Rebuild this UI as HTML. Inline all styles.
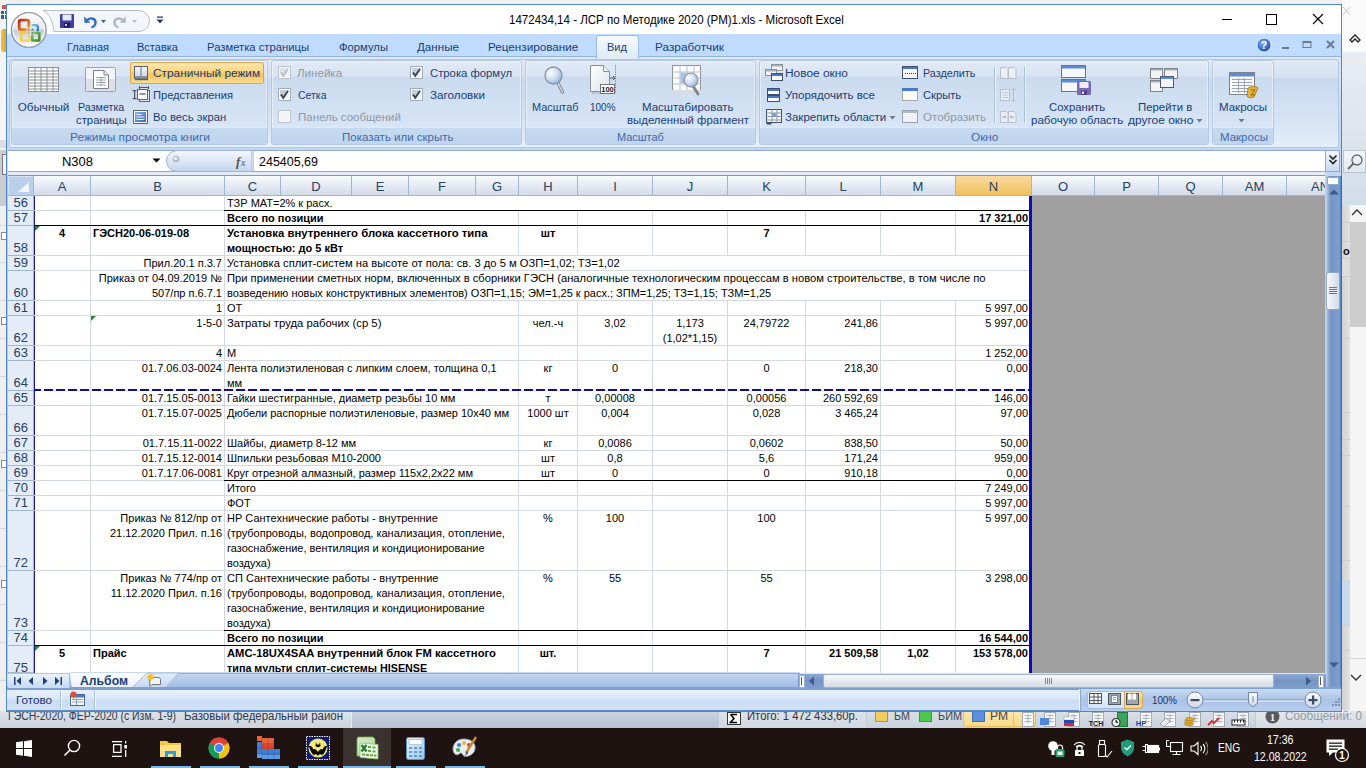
<!DOCTYPE html><html><head><meta charset="utf-8"><style>
*{margin:0;padding:0;box-sizing:border-box}
html,body{width:1366px;height:768px;overflow:hidden;background:#EEEEEE;font-family:"Liberation Sans", sans-serif;position:relative}
.a{position:absolute}
.tx{position:absolute;line-height:1;white-space:nowrap}
.ct{position:absolute;font-size:11px;line-height:15px;color:#000;white-space:nowrap;padding:0 2px}
.ch{position:absolute;top:176px;height:20px;background:linear-gradient(#F9FCFD,#E4EAF3 50%,#D3DBE9);font-size:13px;line-height:21px;text-align:center;color:#27415F;border-right:1px solid #9EB6CE;border-bottom:1px solid #9EB6CE}
.ch.sel{background:linear-gradient(#F9D99F,#F1C15F);color:#27415F}
.rh{position:absolute;left:8px;width:26px;background:#E4ECF7;border-bottom:1px solid #9EB6CE;border-right:1px solid #9EB6CE;font-size:13px;color:#27415F;overflow:hidden}
.rh span{position:absolute;right:5px;line-height:16px}
.grp{position:absolute;top:60px;height:85px;border:1px solid #B3C9E4;border-radius:3px;background:linear-gradient(#E1EAF6,#D7E3F3 15px,#CBDBEE 16px,#D6E4F5 64px,#DFEBFA 68px);box-shadow:inset 0 0 0 1px rgba(255,255,255,0.45)}
.gl{position:absolute;left:0;right:0;bottom:0;height:16px;background:linear-gradient(#C5D9F0,#C0D5EE);border-radius:0 0 2px 2px}
</style></head><body>
<div class="a" style="left:0;top:0;width:1366px;height:728px;background:#EEEEEE"></div><div class="a" style="left:0;top:0;width:7px;height:150px;background:#F4F4F4"></div><svg class="a" style="left:0;top:4px" width="7" height="16"><rect x="2" y="1" width="5" height="4" fill="#D9534F"/><rect x="1" y="7" width="6" height="8" fill="#2F5FA8"/><rect x="1" y="10" width="6" height="1" fill="#fff"/><rect x="4" y="7" width="1" height="8" fill="#fff"/></svg><div class="a" style="left:1px;top:29px;width:6px;height:23px;background:linear-gradient(90deg,#F2C14E,#E0A21C);border-radius:3px 0 0 3px"></div><div class="a" style="left:0;top:140px;width:7px;height:8px;background:#DADDE2"></div><div class="a" style="left:0;top:150px;width:7px;height:56px;background:#C9CDD3"></div><div class="a" style="left:2px;top:154px;width:5px;height:21px;background:#F2F2F2;border:1px solid #7A7A7A;border-right:none"></div><div class="a" style="left:0;top:206px;width:7px;height:504px;background:#EFEFEF"></div><div class="a" style="left:0;top:225px;width:7px;height:1px;background:#D6D6D6"></div><div class="a" style="left:0;top:262px;width:7px;height:1px;background:#D6D6D6"></div><div class="a" style="left:0;top:300px;width:7px;height:1px;background:#D6D6D6"></div><div class="a" style="left:0;top:338px;width:7px;height:1px;background:#D6D6D6"></div><div class="a" style="left:0;top:376px;width:7px;height:1px;background:#D6D6D6"></div><div class="a" style="left:0;top:414px;width:7px;height:1px;background:#D6D6D6"></div><div class="a" style="left:0;top:452px;width:7px;height:1px;background:#D6D6D6"></div><div class="a" style="left:0;top:490px;width:7px;height:1px;background:#D6D6D6"></div><div class="a" style="left:0;top:528px;width:7px;height:1px;background:#D6D6D6"></div><div class="a" style="left:0;top:566px;width:7px;height:1px;background:#D6D6D6"></div><div class="a" style="left:0;top:604px;width:7px;height:1px;background:#D6D6D6"></div><div class="a" style="left:0;top:642px;width:7px;height:1px;background:#D6D6D6"></div><div class="a" style="left:0;top:680px;width:7px;height:1px;background:#D6D6D6"></div><div class="a" style="left:1px;top:232px;width:6px;height:8px;border:1px solid #8A8A8A;border-right:none;background:#fff"></div><div class="a" style="left:1px;top:317px;width:6px;height:8px;border:1px solid #8A8A8A;border-right:none;background:#fff"></div><div class="a" style="left:1px;top:460px;width:6px;height:8px;border:1px solid #8A8A8A;border-right:none;background:#fff"></div><div class="a" style="left:1px;top:580px;width:6px;height:8px;border:1px solid #8A8A8A;border-right:none;background:#fff"></div><div class="a" style="left:1342px;top:0;width:24px;height:52px;background:#FAFAFA"></div><svg class="a" style="left:1342px;top:6px" width="10" height="12"><path d="M1 1 L8 9 M8 1 L1 9" stroke="#C8C8C8" stroke-width="1"/></svg><div class="a" style="left:1342px;top:52px;width:24px;height:153px;background:linear-gradient(#E8EDF3,#D3DDE9)"></div><svg class="a" style="left:1348px;top:31px" width="16" height="14"><path d="M2 9 L7 4 L12 9 L10 11 L7 8 L4 11 Z" fill="none" stroke="#222" stroke-width="1.3"/></svg><div class="a" style="left:1343px;top:150px;width:23px;height:23px;background:linear-gradient(#F4F6F9,#E0E6EE);border:1px solid #BCC6D3"></div><svg class="a" style="left:1345px;top:153px" width="20" height="18"><circle cx="12" cy="7" r="5" fill="none" stroke="#666" stroke-width="1.3"/><path d="M8.5 10.5 L3 16" stroke="#666" stroke-width="1.8"/></svg><div class="a" style="left:1342px;top:205px;width:24px;height:523px;background:#F5F5F5"></div><div class="a" style="left:1342px;top:205px;width:8px;height:505px;background:linear-gradient(90deg,#D2D2D2,#E2E2E2)"></div><div class="a" style="left:1342px;top:259px;width:8px;height:17px;background:#DCDCDC"></div><div class="a" style="left:1343px;top:245px;font:bold 11px Liberation Sans;color:#111">o</div><div class="a" style="left:1342px;top:222px;width:8px;height:1px;background:#C9CFD6"></div><div class="a" style="left:1342px;top:241px;width:8px;height:1px;background:#C9CFD6"></div><div class="a" style="left:1342px;top:258px;width:8px;height:1px;background:#C9CFD6"></div><div class="a" style="left:1342px;top:276px;width:8px;height:1px;background:#C9CFD6"></div><div class="a" style="left:1342px;top:338px;width:8px;height:1px;background:#C9CFD6"></div><div class="a" style="left:1342px;top:412px;width:8px;height:1px;background:#C9CFD6"></div><div class="a" style="left:1342px;top:439px;width:8px;height:1px;background:#C9CFD6"></div><div class="a" style="left:1342px;top:455px;width:8px;height:1px;background:#C9CFD6"></div><div class="a" style="left:1342px;top:506px;width:8px;height:1px;background:#C9CFD6"></div><div class="a" style="left:1342px;top:560px;width:8px;height:1px;background:#C9CFD6"></div><div class="a" style="left:1342px;top:625px;width:8px;height:1px;background:#C9CFD6"></div><div class="a" style="left:1342px;top:650px;width:8px;height:1px;background:#C9CFD6"></div><div class="a" style="left:1342px;top:580px;width:8px;height:45px;background:#C9D9EC"></div><svg class="a" style="left:1350px;top:207px" width="14" height="10"><path d="M2 8 L7 3 L12 8" fill="none" stroke="#333" stroke-width="1.4"/></svg><div class="a" style="left:1350px;top:222px;width:16px;height:105px;background:#CDCDCD"></div><div class="a" style="left:1342px;top:658px;width:24px;height:1px;background:#D9D9D9"></div><svg class="a" style="left:1349px;top:673px" width="14" height="10"><path d="M2 2 L7 7 L12 2" fill="none" stroke="#333" stroke-width="1.4"/></svg>
<div class="a" style="left:0;top:711px;width:1366px;height:17px;background:linear-gradient(#CBD3DE,#B6C1CF)"></div><div class="a" style="left:0;top:711px;width:351px;height:17px;background:linear-gradient(#DDE3EA,#CBD3DD)"></div><div class="a" style="left:351px;top:711px;width:1px;height:17px;background:#E6EBF1"></div><div class="a" style="left:719px;top:711px;width:147px;height:17px;background:linear-gradient(#DDE3EA,#CFD7E1)"></div><div class="a" style="left:866px;top:711px;width:390px;height:17px;background:linear-gradient(#D8DFE7,#C8D1DC)"></div><div class="a" style="left:1256px;top:711px;width:110px;height:17px;background:linear-gradient(#E4E8ED,#D5DBE3)"></div><div class="tx" style="left:8.00px;top:709.54px;font-size:12.300px;color:#2B3A4E;transform:scaleX(0.8508);transform-origin:0 0">ГЭСН-2020, ФЕР-2020 (с Изм. 1-9)</div><div class="tx" style="left:184.00px;top:709.54px;font-size:12.300px;color:#2B3A4E;transform:scaleX(0.9308);transform-origin:0 0">Базовый федеральный район</div><div class="a" style="left:718px;top:711px;width:1px;height:17px;background:#C3CAD4"></div><svg class="a" style="left:727px;top:712px" width="14" height="13"><rect x="0.5" y="0.5" width="13" height="12" fill="#fff" stroke="#333"/><path d="M3.5 2.5 H10 M3.5 2.5 L7 6.5 L3.5 10.5 H10" fill="none" stroke="#000" stroke-width="1.6"/></svg><div class="tx" style="left:747.00px;top:710.04px;font-size:12.300px;color:#333;transform:scaleX(0.9164);transform-origin:0 0">Итого: 1 472 433,60р.</div><div class="a" style="left:866px;top:711px;width:1px;height:17px;background:#C3CAD4"></div><div class="a" style="left:875px;top:710px;width:13px;height:12px;background:#F1CC5E;border:1px solid #B89531"></div><div class="tx" style="left:894.00px;top:709.80px;font-size:12.000px;color:#444;transform:scaleX(0.8951);transform-origin:0 0">БМ</div><div class="a" style="left:919px;top:710px;width:13px;height:12px;background:#4FC74A;border:1px solid #3A9A36"></div><div class="tx" style="left:938.00px;top:709.80px;font-size:12.000px;color:#444;transform:scaleX(0.9057);transform-origin:0 0">БИМ</div><div class="a" style="left:963px;top:706px;width:53px;height:21px;background:linear-gradient(#FCEBB8,#F8D987);border:1px solid #E3BE62;border-radius:3px"></div><div class="a" style="left:972px;top:710px;width:13px;height:12px;background:#5B8FE0;border:1px solid #3D6CB8"></div><div class="tx" style="left:990.00px;top:709.80px;font-size:12.000px;color:#444;transform:scaleX(1.0070);transform-origin:0 0">РМ</div><div class="a" style="left:1013px;top:706px;width:23px;height:21px;background:linear-gradient(#FCEBB8,#F8D987);border:1px solid #E3BE62;border-radius:3px"></div><svg class="a" style="left:0;top:712px" width="1260" height="16"><rect x="1022.5" y="0.5" width="11" height="14" fill="#F7F8FA" stroke="#A3AAB3"/><g fill="#AEB5BE"><rect x="1024.5" y="3" width="7" height="1"/><rect x="1024.5" y="6" width="7" height="1"/><rect x="1024.5" y="9" width="7" height="1"/><rect x="1027.5" y="2" width="1" height="9"/></g><rect x="1044.5" y="0.5" width="11" height="14" fill="#F7F8FA" stroke="#A3AAB3"/><g fill="#AEB5BE"><rect x="1046.5" y="3" width="7" height="1"/><rect x="1046.5" y="6" width="7" height="1"/><rect x="1046.5" y="9" width="7" height="1"/><rect x="1049.5" y="2" width="1" height="9"/></g><rect x="1040" y="6" width="9" height="7" fill="#4F86D9"/><rect x="1068.5" y="0.5" width="11" height="14" fill="#F7F8FA" stroke="#A3AAB3"/><g fill="#AEB5BE"><rect x="1070.5" y="3" width="7" height="1"/><rect x="1070.5" y="6" width="7" height="1"/><rect x="1070.5" y="9" width="7" height="1"/><rect x="1073.5" y="2" width="1" height="9"/></g><rect x="1064" y="5" width="10" height="3" fill="#FFFFFF" stroke="#999" stroke-width="0.5"/><rect x="1064" y="8" width="10" height="3" fill="#2446B8"/><rect x="1064" y="11" width="10" height="3" fill="#D42A2A"/><rect x="1092.5" y="0.5" width="11" height="14" fill="#F7F8FA" stroke="#A3AAB3"/><g fill="#AEB5BE"><rect x="1094.5" y="3" width="7" height="1"/><rect x="1094.5" y="6" width="7" height="1"/><rect x="1094.5" y="9" width="7" height="1"/><rect x="1097.5" y="2" width="1" height="9"/></g><text x="1096" y="13.5" font-family="Liberation Sans" font-size="7" font-weight="bold" fill="#111" text-anchor="middle">TCH</text><rect x="1117.5" y="0.5" width="10" height="14" fill="#3DA35A" stroke="#1F7A3A"/><circle cx="1116" cy="10.5" r="4" fill="#F4F4F4" stroke="#333" stroke-width="1.2"/><path d="M1116 8 V10.5 H1118" stroke="#333" stroke-width="1"/><rect x="1140.5" y="0.5" width="11" height="14" fill="#F7F8FA" stroke="#A3AAB3"/><g fill="#AEB5BE"><rect x="1142.5" y="3" width="7" height="1"/><rect x="1142.5" y="6" width="7" height="1"/><rect x="1142.5" y="9" width="7" height="1"/><rect x="1145.5" y="2" width="1" height="9"/></g><text x="1141" y="13.5" font-family="Liberation Sans" font-size="7.5" font-weight="bold" fill="#1E3FA8" text-anchor="middle">HP</text><rect x="1164.5" y="0.5" width="11" height="14" fill="#F7F8FA" stroke="#A3AAB3"/><g fill="#AEB5BE"><rect x="1166.5" y="3" width="7" height="1"/><rect x="1166.5" y="6" width="7" height="1"/><rect x="1166.5" y="9" width="7" height="1"/><rect x="1169.5" y="2" width="1" height="9"/></g><path d="M1160 12 L1166 6 L1170 9 L1164 15 Z" fill="#E9EBEE" stroke="#8C9298" stroke-width="0.8"/><rect x="1189.5" y="0.5" width="11" height="14" fill="#F7F8FA" stroke="#A3AAB3"/><g fill="#AEB5BE"><rect x="1191.5" y="3" width="7" height="1"/><rect x="1191.5" y="6" width="7" height="1"/><rect x="1191.5" y="9" width="7" height="1"/><rect x="1194.5" y="2" width="1" height="9"/></g><g fill="#E0A92A" stroke="#8E6A12" stroke-width="0.5"><ellipse cx="1189" cy="12" rx="4.5" ry="1.8"/><ellipse cx="1189" cy="9.5" rx="4.5" ry="1.8"/><ellipse cx="1190" cy="7" rx="4.5" ry="1.8"/></g><rect x="1213.5" y="0.5" width="11" height="14" fill="#F7F8FA" stroke="#A3AAB3"/><g fill="#AEB5BE"><rect x="1215.5" y="3" width="7" height="1"/><rect x="1215.5" y="6" width="7" height="1"/><rect x="1215.5" y="9" width="7" height="1"/><rect x="1218.5" y="2" width="1" height="9"/></g><path d="M1208 13 L1212 9 L1214 11 L1219 6" fill="none" stroke="#D4302A" stroke-width="1.8"/><rect x="1237.5" y="0.5" width="11" height="14" fill="#F7F8FA" stroke="#A3AAB3"/><g fill="#AEB5BE"><rect x="1239.5" y="3" width="7" height="1"/><rect x="1239.5" y="6" width="7" height="1"/><rect x="1239.5" y="9" width="7" height="1"/><rect x="1242.5" y="2" width="1" height="9"/></g><rect x="1232" y="8" width="13" height="5" fill="#FFFFFF" stroke="#222" stroke-width="1"/><g fill="#222"><rect x="1234" y="8" width="1" height="2.5"/><rect x="1237" y="8" width="1" height="2.5"/><rect x="1240" y="8" width="1" height="2.5"/><rect x="1243" y="8" width="1" height="2.5"/></g></svg><div class="a" style="left:1255px;top:711px;width:1px;height:17px;background:#C3CAD4"></div><svg class="a" style="left:1265px;top:709px" width="16" height="16"><circle cx="7.5" cy="7.5" r="7" fill="#595959"/><text x="7.5" y="11.5" font-family="Liberation Serif" font-size="11" font-weight="bold" fill="#F0F0F0" text-anchor="middle">1</text></svg><div class="tx" style="left:1285.00px;top:709.54px;font-size:12.300px;color:#9099A5;transform:scaleX(0.9550);transform-origin:0 0">Сообщений: 0</div>
<div class="a" style="left:6px;top:4px;width:1336px;height:708px;background:#BFDBFF;border:1px solid #4F86C6;box-shadow:inset 1px 0 0 #A9C8EE, inset -1px 0 0 #A9C8EE"></div>
<div class="a" style="left:7px;top:5px;width:1334px;height:29px;background:#fff"></div>
<div class="a" style="left:7px;top:34px;width:1334px;height:23px;background:#BFDBFF"></div><div class="a" style="left:7px;top:56px;width:1334px;height:1px;background:#92B4E0"></div><div class="tx" style="left:67.00px;top:41.45px;font-size:11.700px;color:#183E74;transform:scaleX(0.9442);transform-origin:0 0">Главная</div><div class="tx" style="left:137.00px;top:41.45px;font-size:11.700px;color:#183E74;transform:scaleX(0.9435);transform-origin:0 0">Вставка</div><div class="tx" style="left:207.00px;top:41.45px;font-size:11.700px;color:#183E74;transform:scaleX(0.9620);transform-origin:0 0">Разметка страницы</div><div class="tx" style="left:339.00px;top:41.45px;font-size:11.700px;color:#183E74;transform:scaleX(0.9634);transform-origin:0 0">Формулы</div><div class="tx" style="left:417.00px;top:41.45px;font-size:11.700px;color:#183E74;transform:scaleX(0.9945);transform-origin:0 0">Данные</div><div class="tx" style="left:488.00px;top:41.45px;font-size:11.700px;color:#183E74">Рецензирование</div><div class="tx" style="left:655.00px;top:41.45px;font-size:11.700px;color:#183E74;transform:scaleX(1.0124);transform-origin:0 0">Разработчик</div><svg class="a" style="left:1250px;top:36px" width="90" height="20">
<defs><radialGradient id="hg" cx="40%" cy="35%" r="65%"><stop offset="0" stop-color="#7FB2F0"/><stop offset="1" stop-color="#1A4FB8"/></radialGradient></defs>
<circle cx="14" cy="9" r="7" fill="url(#hg)" stroke="#fff" stroke-width="0.8"/>
<text x="14" y="12.8" font-family="Liberation Sans" font-size="10.5" font-weight="bold" fill="#fff" text-anchor="middle">?</text>
<rect x="32" y="11" width="7" height="2" fill="#6C7A8D"/>
<rect x="53" y="5.5" width="8" height="6" fill="none" stroke="#6C7A8D" stroke-width="1"/><rect x="53" y="5" width="8" height="2" fill="#6C7A8D"/>
<path d="M77 5 L84 12 M84 5 L77 12" stroke="#6C7A8D" stroke-width="2"/>
</svg>
<div class="a" style="left:7px;top:57px;width:1334px;height:93px;background:linear-gradient(#E2EAF6 0px,#DAE6F4 3px,#C9DAEE 60%,#C3D6EE 100%)"></div><div class="a" style="left:596px;top:35px;width:43px;height:24px;border:1px solid #9EBBE2;border-bottom:none;border-radius:3px 3px 0 0;background:linear-gradient(#F7FAFE,#E6EEF8 70%,#E2EAF6)"></div><div class="tx" style="left:607.00px;top:41.62px;font-size:11.500px;color:#183E74;transform:scaleX(0.9610);transform-origin:0 0">Вид</div><div class="a" style="left:9px;top:59px;width:1330px;height:89px;border:1px solid #AFC8E6;border-radius:3px;background:linear-gradient(#E0E9F5,#D5E1F1 20%,#C8D9EE 22%,#DCE8F7 85%,#E6F0FC)"></div><div class="grp" style="left:11px;width:257px"><div class="gl"></div></div><div class="tx" style="left:69.70px;top:131.65px;font-size:11.000px;color:#3E6AAA;transform:scaleX(1.0808);transform-origin:0 0">Режимы просмотра книги</div><div class="grp" style="left:271px;width:251px"><div class="gl"></div></div><div class="tx" style="left:341.60px;top:131.65px;font-size:11.000px;color:#3E6AAA;transform:scaleX(1.0451);transform-origin:0 0">Показать или скрыть</div><div class="grp" style="left:525px;width:231px"><div class="gl"></div></div><div class="tx" style="left:617.40px;top:131.65px;font-size:11.000px;color:#3E6AAA;transform:scaleX(0.9965);transform-origin:0 0">Масштаб</div><div class="grp" style="left:759px;width:450px"><div class="gl"></div></div><div class="tx" style="left:970.80px;top:131.65px;font-size:11.000px;color:#3E6AAA;transform:scaleX(1.0719);transform-origin:0 0">Окно</div><div class="grp" style="left:1212px;width:62px"><div class="gl"></div></div><div class="tx" style="left:1219.60px;top:131.65px;font-size:11.000px;color:#3E6AAA;transform:scaleX(1.0445);transform-origin:0 0">Макросы</div><svg class="a" style="left:27px;top:66px" width="34" height="28"><rect x="1.5" y="1.5" width="30" height="24" fill="#fff" stroke="#8E9094" stroke-width="1"/><rect x="7.5" y="1.5" width="1" height="24" fill="#8E9094"/><rect x="13.5" y="1.5" width="1" height="24" fill="#8E9094"/><rect x="19.5" y="1.5" width="1" height="24" fill="#8E9094"/><rect x="25.5" y="1.5" width="1" height="24" fill="#8E9094"/><rect x="1.5" y="4.5" width="30" height="1" fill="#8E9094"/><rect x="1.5" y="7.5" width="30" height="1" fill="#8E9094"/><rect x="1.5" y="10.5" width="30" height="1" fill="#8E9094"/><rect x="1.5" y="13.5" width="30" height="1" fill="#8E9094"/><rect x="1.5" y="16.5" width="30" height="1" fill="#8E9094"/><rect x="1.5" y="19.5" width="30" height="1" fill="#8E9094"/><rect x="1.5" y="22.5" width="30" height="1" fill="#8E9094"/></svg><div class="tx" style="left:17.70px;top:100.86px;font-size:11.700px;color:#183E74">Обычный</div><svg class="a" style="left:84px;top:66px" width="34" height="28">
<rect x="1.5" y="1.5" width="30" height="24" rx="1" fill="#F2F4F7" stroke="#9EA3AA"/>
<rect x="2" y="13" width="29" height="12" fill="#DDE1E7"/>
<path d="M9.5 4.5 H20 L24.5 9 V22.5 H9.5 Z" fill="#fff" stroke="#7B818A"/>
<path d="M20 4.5 V9 H24.5" fill="#E6E9EE" stroke="#7B818A"/>
<g fill="#9AA2AD"><rect x="12" y="11" width="10" height="1"/><rect x="12" y="13.5" width="10" height="1"/><rect x="12" y="16" width="10" height="1"/><rect x="12" y="18.5" width="10" height="1"/><rect x="16.5" y="11" width="1" height="9"/></g>
</svg><div class="tx" style="left:77.70px;top:100.86px;font-size:11.700px;color:#183E74;transform:scaleX(0.9165);transform-origin:0 0">Разметка</div><div class="tx" style="left:76.00px;top:113.56px;font-size:11.700px;color:#183E74;transform:scaleX(0.9698);transform-origin:0 0">страницы</div><div class="a" style="left:130px;top:62px;width:134px;height:22px;border:1px solid #D9A84E;border-radius:2px;background:linear-gradient(#FDE7B0,#FBD583 45%,#F9C25C 55%,#FBDC8E)"></div><svg class="a" style="left:133px;top:65px" width="16" height="16">
<defs><linearGradient id="sr" x1="0" y1="0" x2="0" y2="1"><stop offset="0" stop-color="#F4F7FC"/><stop offset="1" stop-color="#C7D3E6"/></linearGradient></defs>
<rect x="1.5" y="1.5" width="13" height="12" fill="url(#sr)" stroke="#59606B"/>
<rect x="7.5" y="2" width="1" height="10" fill="#6B7380"/>
<rect x="2" y="11" width="12" height="2.5" fill="#8A929E"/>
<rect x="2" y="14" width="13" height="1.2" fill="#3E434B" opacity="0.8"/>
</svg><div class="tx" style="left:152.70px;top:66.56px;font-size:11.700px;color:#183E74;transform:scaleX(1.0128);transform-origin:0 0">Страничный режим</div><svg class="a" style="left:132px;top:86px" width="19" height="17">
<g fill="#4A5566"><rect x="2" y="4" width="1.2" height="9"/><rect x="0.5" y="4" width="4" height="1.2"/><rect x="0.5" y="12" width="4" height="1.2"/>
<rect x="7" y="1" width="10" height="1"/><rect x="7" y="0" width="1" height="3"/><rect x="16" y="0" width="1" height="3"/></g>
<rect x="7.5" y="4.5" width="10" height="11" fill="#E6EAF0" stroke="#5B6573"/>
<rect x="5.5" y="3.5" width="10" height="10" fill="#F7F9FC" stroke="#5B6573"/>
<rect x="7.5" y="7" width="6" height="2" fill="#8C96A6"/>
</svg><div class="tx" style="left:152.50px;top:88.96px;font-size:11.700px;color:#183E74;transform:scaleX(0.9500);transform-origin:0 0">Представления</div><svg class="a" style="left:132px;top:109px" width="17" height="16">
<defs><linearGradient id="fs" x1="0" y1="0" x2="1" y2="1"><stop offset="0" stop-color="#8FB3EC"/><stop offset="1" stop-color="#3C63B8"/></linearGradient></defs>
<rect x="1.5" y="1.5" width="14" height="13" fill="#FAFBFD" stroke="#5A6270"/>
<rect x="3" y="3" width="11" height="10" fill="url(#fs)"/>
<rect x="4.5" y="5" width="5" height="1" fill="#EAF1FC"/><rect x="4.5" y="7.5" width="8" height="1" fill="#EAF1FC"/><rect x="4.5" y="10" width="8" height="1" fill="#EAF1FC"/>
</svg><div class="tx" style="left:152.50px;top:110.66px;font-size:11.700px;color:#183E74;transform:scaleX(0.9651);transform-origin:0 0">Во весь экран</div><svg class="a" style="left:278px;top:66px" width="13" height="13"><rect x="0.5" y="0.5" width="12" height="12" fill="#FAFBFC" stroke="#B9C2CE"/><rect x="2" y="2" width="9" height="9" fill="#F1F3F6"/><rect x="2" y="2" width="6" height="6" fill="#DDE2E8"/><path d="M3 6.5 L5.3 9.8 L10 2.8" fill="none" stroke="#B9C1CC" stroke-width="1.9"/></svg><svg class="a" style="left:278px;top:88px" width="13" height="13"><rect x="0.5" y="0.5" width="12" height="12" fill="#FAFBFC" stroke="#A2ADBA"/><rect x="2" y="2" width="9" height="9" fill="#F1F3F6"/><rect x="2" y="2" width="6" height="6" fill="#C9CED6"/><path d="M3 6.5 L5.3 9.8 L10 2.8" fill="none" stroke="#34435E" stroke-width="1.9"/></svg><svg class="a" style="left:278px;top:110px" width="13" height="13"><rect x="0.5" y="0.5" width="12" height="12" fill="#FAFBFC" stroke="#B9C2CE"/><rect x="2" y="2" width="9" height="9" fill="#F1F3F6"/></svg><svg class="a" style="left:410px;top:66px" width="13" height="13"><rect x="0.5" y="0.5" width="12" height="12" fill="#FAFBFC" stroke="#A2ADBA"/><rect x="2" y="2" width="9" height="9" fill="#F1F3F6"/><rect x="2" y="2" width="6" height="6" fill="#C9CED6"/><path d="M3 6.5 L5.3 9.8 L10 2.8" fill="none" stroke="#34435E" stroke-width="1.9"/></svg><svg class="a" style="left:410px;top:88px" width="13" height="13"><rect x="0.5" y="0.5" width="12" height="12" fill="#FAFBFC" stroke="#A2ADBA"/><rect x="2" y="2" width="9" height="9" fill="#F1F3F6"/><rect x="2" y="2" width="6" height="6" fill="#C9CED6"/><path d="M3 6.5 L5.3 9.8 L10 2.8" fill="none" stroke="#34435E" stroke-width="1.9"/></svg><div class="tx" style="left:297.20px;top:66.76px;font-size:11.700px;color:#8D98A8;transform:scaleX(0.9898);transform-origin:0 0">Линейка</div><div class="tx" style="left:297.50px;top:88.66px;font-size:11.700px;color:#183E74;transform:scaleX(0.8968);transform-origin:0 0">Сетка</div><div class="tx" style="left:297.50px;top:110.56px;font-size:11.700px;color:#8D98A8;transform:scaleX(0.9819);transform-origin:0 0">Панель сообщений</div><div class="tx" style="left:429.50px;top:66.76px;font-size:11.700px;color:#183E74;transform:scaleX(0.9658);transform-origin:0 0">Строка формул</div><div class="tx" style="left:429.50px;top:88.66px;font-size:11.700px;color:#183E74;transform:scaleX(0.9959);transform-origin:0 0">Заголовки</div><svg class="a" style="left:540px;top:63px" width="30" height="32">
<defs><radialGradient id="lens" cx="35%" cy="35%" r="70%"><stop offset="0" stop-color="#FFFFFF"/><stop offset="0.6" stop-color="#C9DAF0"/><stop offset="1" stop-color="#8FB1E0"/></radialGradient></defs>
<path d="M17.5 19 L22.5 29" stroke="#7E8691" stroke-width="3.2" stroke-linecap="round"/>
<path d="M17.5 19 L22.5 29" stroke="#D9DDE3" stroke-width="1.4" stroke-linecap="round"/>
<circle cx="13.5" cy="12.5" r="8.5" fill="url(#lens)" stroke="#8A939E" stroke-width="1.3"/>
</svg><div class="tx" style="left:531.60px;top:100.66px;font-size:11.700px;color:#183E74;transform:scaleX(0.9297);transform-origin:0 0">Масштаб</div><svg class="a" style="left:588px;top:63px" width="30" height="33">
<path d="M27.5 2 V30 H3" fill="none" stroke="#6D737B" stroke-width="1" stroke-dasharray="1,1.2"/>
<path d="M2.5 2.5 H15.5 L21.5 8.5 V28.5 H2.5 Z" fill="url(#pg)" stroke="#8A9099"/>
<defs><linearGradient id="pg" x1="0" y1="0" x2="1" y2="1"><stop offset="0" stop-color="#FFFFFF"/><stop offset="1" stop-color="#DCE2EA"/></linearGradient></defs>
<path d="M15.5 2.5 V8.5 H21.5" fill="#EEF1F5" stroke="#8A9099"/>
<path d="M22 15 H27 M25 13 L27 15 L25 17" fill="none" stroke="#555" stroke-width="1"/>
<rect x="12.5" y="21.5" width="14" height="9" fill="#fff" stroke="#6D737B"/>
<text x="19.5" y="29" font-family="Liberation Sans" font-size="7.5" font-weight="bold" fill="#222" text-anchor="middle">100</text>
</svg><div class="tx" style="left:590.30px;top:100.66px;font-size:11.700px;color:#183E74;transform:scaleX(0.8527);transform-origin:0 0">100%</div><svg class="a" style="left:671px;top:64px" width="34" height="32">
<rect x="1.5" y="1.5" width="28" height="26" fill="#fff" stroke="#8D949C"/>
<g fill="#B8C1CC"><rect x="8.5" y="1.5" width="1" height="26"/><rect x="15.5" y="1.5" width="1" height="26"/><rect x="22.5" y="1.5" width="1" height="26"/>
<rect x="1.5" y="7.5" width="28" height="1"/><rect x="1.5" y="13.5" width="28" height="1"/><rect x="1.5" y="19.5" width="28" height="1"/></g>
<rect x="9.5" y="8.5" width="6" height="11" fill="#A8C2EC"/>
<rect x="1" y="26" width="29" height="4" fill="#D7DCE3"/>
<path d="M22 22 L27 30" stroke="#7E8691" stroke-width="3" stroke-linecap="round"/>
<circle cx="20" cy="16" r="7" fill="url(#lens)" stroke="#8A939E" stroke-width="1.2"/>
</svg><div class="tx" style="left:641.60px;top:100.66px;font-size:11.700px;color:#183E74;transform:scaleX(0.9807);transform-origin:0 0">Масштабировать</div><div class="tx" style="left:626.90px;top:113.56px;font-size:11.700px;color:#183E74;transform:scaleX(0.9747);transform-origin:0 0">выделенный фрагмент</div><svg class="a" style="left:765px;top:64px" width="20" height="18">
<rect x="6.5" y="0.5" width="11" height="6" fill="#F3F5F8" stroke="#8B929C"/><rect x="7" y="1" width="10" height="1.5" fill="#A9B1BC"/>
<rect x="0.5" y="5.5" width="11" height="6" fill="#F3F5F8" stroke="#8B929C"/><rect x="1" y="6" width="10" height="1.5" fill="#A9B1BC"/>
<rect x="6.5" y="9.5" width="11" height="7" fill="#FAFBFD" stroke="#3F4F6E"/><rect x="7" y="10" width="10" height="2" fill="#4C78C9"/>
</svg><div class="tx" style="left:785.40px;top:66.76px;font-size:11.700px;color:#183E74;transform:scaleX(1.0171);transform-origin:0 0">Новое окно</div><svg class="a" style="left:766px;top:87px" width="16" height="16">
<rect x="1.5" y="1.5" width="12" height="6" fill="#F8FAFD" stroke="#3E4D6B"/><rect x="2" y="2" width="11" height="2" fill="#4C78C9"/>
<rect x="1.5" y="8.5" width="12" height="6" fill="#F8FAFD" stroke="#3E4D6B"/><rect x="2" y="9" width="11" height="2" fill="#4C78C9"/>
</svg><div class="tx" style="left:785.40px;top:88.66px;font-size:11.700px;color:#183E74;transform:scaleX(0.9866);transform-origin:0 0">Упорядочить все</div><svg class="a" style="left:765px;top:108px" width="18" height="18">
<rect x="1.5" y="1.5" width="15" height="13" fill="#F8FAFD" stroke="#3E4D6B"/>
<g fill="#8D96A4"><rect x="1.5" y="4.5" width="15" height="1"/><rect x="1.5" y="8" width="15" height="1"/><rect x="1.5" y="11.5" width="15" height="1"/><rect x="6.5" y="1.5" width="1" height="13"/><rect x="11.5" y="1.5" width="1" height="13"/></g>
<rect x="7" y="5" width="4.5" height="3" fill="#7FA3DC"/>
<rect x="1.5" y="14.5" width="5" height="2" fill="#3E4D6B"/>
</svg><div class="tx" style="left:785.40px;top:110.56px;font-size:11.700px;color:#183E74;transform:scaleX(0.9841);transform-origin:0 0">Закрепить области</div><svg class="a" style="left:889px;top:115px" width="8" height="6"><path d="M0.5 1 H6.5 L3.5 4.5 Z" fill="#6B7A90"/></svg><svg class="a" style="left:902px;top:66px" width="18" height="15">
<rect x="0.5" y="0.5" width="15" height="12" fill="#F6F8FC" stroke="#3E4D6B"/><rect x="1" y="1" width="14" height="2" fill="#4C78C9"/>
<path d="M3 7.5 H14" stroke="#333" stroke-width="1" stroke-dasharray="1,1"/>
</svg><div class="tx" style="left:922.60px;top:66.76px;font-size:11.700px;color:#183E74;transform:scaleX(0.9256);transform-origin:0 0">Разделить</div><svg class="a" style="left:902px;top:88px" width="18" height="15">
<rect x="0.5" y="0.5" width="15" height="12" fill="#FBFBF5" stroke="#666" stroke-dasharray="1,1"/><rect x="0" y="0" width="16" height="3" fill="#4C78C9"/>
</svg><div class="tx" style="left:922.60px;top:88.66px;font-size:11.700px;color:#183E74;transform:scaleX(0.9572);transform-origin:0 0">Скрыть</div><svg class="a" style="left:902px;top:110px" width="18" height="15">
<rect x="0.5" y="0.5" width="15" height="12" fill="#EEF2F8" stroke="#9AA3AF"/><rect x="1" y="1" width="14" height="2" fill="#B3BAC4"/>
</svg><div class="tx" style="left:922.60px;top:110.56px;font-size:11.700px;color:#8D98A8;transform:scaleX(0.9903);transform-origin:0 0">Отобразить</div><div class="a" style="left:994px;top:67px;width:1px;height:56px;background:#A9BED8;box-shadow:1px 0 0 #F0F6FF"></div><div class="a" style="left:1024px;top:67px;width:1px;height:56px;background:#A9BED8;box-shadow:1px 0 0 #F0F6FF"></div><svg class="a" style="left:1000px;top:66px" width="18" height="60" opacity="0.75">
<g fill="#F2F4F7" stroke="#AEB5BF"><path d="M0.5 1.5 H6 L8 3.5 V12.5 H0.5 Z"/><path d="M8.5 1.5 H14 L16 3.5 V12.5 H8.5 Z"/></g>
<g transform="translate(0,22)"><rect x="0.5" y="1.5" width="9" height="11" fill="#F2F4F7" stroke="#AEB5BF"/><g fill="#B9C0C9"><rect x="2" y="4" width="6" height="1"/><rect x="2" y="6.5" width="6" height="1"/><rect x="2" y="9" width="6" height="1"/></g><path d="M13.5 0 V14 M11.5 2 L13.5 0 L15.5 2 M11.5 12 L13.5 14 L15.5 12" fill="none" stroke="#AEB5BF"/></g>
<g transform="translate(0,44)"><g fill="#F2F4F7" stroke="#AEB5BF"><path d="M0.5 1.5 H6 L8 3.5 V12.5 H0.5 Z"/><path d="M8.5 1.5 H14 L16 3.5 V12.5 H8.5 Z"/></g><path d="M2 7 H6 M4.5 5.5 L6 7 L4.5 8.5 M14 7 H10 M11.5 5.5 L10 7 L11.5 8.5" fill="none" stroke="#8D96A2"/></g>
</svg><svg class="a" style="left:1060px;top:64px" width="34" height="34">
<rect x="1.5" y="1.5" width="24" height="12" fill="#F7F8FA" stroke="#6B7380"/><rect x="2" y="2" width="23" height="2.5" fill="#5E8BD8"/>
<rect x="1.5" y="15.5" width="24" height="12" fill="#F7F8FA" stroke="#6B7380"/><rect x="2" y="16" width="23" height="2.5" fill="#5E8BD8"/>
<rect x="17" y="17" width="14" height="14" rx="1" fill="#7A68B3"/>
<rect x="19.5" y="18" width="9" height="6" fill="#F1EEF8"/><rect x="21" y="26.5" width="6" height="4.5" fill="#4A3D80"/><rect x="22" y="27.5" width="2" height="2.5" fill="#E8E4F3"/>
</svg><div class="tx" style="left:1048.80px;top:100.66px;font-size:11.700px;color:#183E74;transform:scaleX(0.9659);transform-origin:0 0">Сохранить</div><div class="tx" style="left:1030.80px;top:113.56px;font-size:11.700px;color:#183E74;transform:scaleX(0.9896);transform-origin:0 0">рабочую область</div><svg class="a" style="left:1149px;top:67px" width="32" height="28">
<g fill="#F3F4F6" stroke="#7F848B"><rect x="1.5" y="1.5" width="12" height="10"/><rect x="15.5" y="1.5" width="13" height="10"/><rect x="1.5" y="13.5" width="12" height="11"/></g>
<g fill="#A9ADB3"><rect x="2" y="2" width="11" height="1.5"/><rect x="16" y="2" width="12" height="1.5"/><rect x="2" y="14" width="11" height="1.5"/></g>
<rect x="11.5" y="9.5" width="13" height="11" fill="#F6F8FB" stroke="#4B5A78"/><rect x="12" y="10" width="12" height="2" fill="#5E8BD8"/>
</svg><div class="tx" style="left:1137.60px;top:100.96px;font-size:11.700px;color:#183E74;transform:scaleX(0.9752);transform-origin:0 0">Перейти в</div><div class="tx" style="left:1128.20px;top:113.56px;font-size:11.700px;color:#183E74;transform:scaleX(1.0226);transform-origin:0 0">другое окно</div><svg class="a" style="left:1196px;top:118px" width="8" height="6"><path d="M0.5 1 H6.5 L3.5 4.5 Z" fill="#6B7A90"/></svg><svg class="a" style="left:1228px;top:71px" width="34" height="28">
<rect x="1.5" y="1.5" width="25" height="22" fill="#FAFBFC" stroke="#7B828C"/><rect x="2" y="2" width="24" height="3.5" fill="#5E8BD8"/>
<g fill="#9CA5B1"><rect x="4" y="8" width="20" height="1"/><rect x="4" y="11" width="20" height="1"/><rect x="4" y="14" width="20" height="1"/><rect x="4" y="17" width="20" height="1"/><rect x="4" y="20" width="20" height="1"/><rect x="10" y="7" width="1" height="15"/><rect x="16" y="7" width="1" height="15"/></g>
<path d="M20 17 C23 15 29 15 30 17 L26 26 C24 27 20 27 19 25 Z" fill="#E2B33A" stroke="#9E7412" stroke-width="0.8"/>
<path d="M23 19 H27 L23 24 H27" fill="none" stroke="#8C6510" stroke-width="1"/>
</svg><div class="tx" style="left:1218.60px;top:100.86px;font-size:11.700px;color:#183E74;transform:scaleX(0.9849);transform-origin:0 0">Макросы</div><svg class="a" style="left:1238px;top:118px" width="8" height="6"><path d="M0.5 1 H6.5 L3.5 4.5 Z" fill="#6B7A90"/></svg>
<svg class="a" style="left:9px;top:10px" width="40" height="40" viewBox="0 0 40 40">
<defs>
<linearGradient id="ob" x1="0" y1="0" x2="0" y2="1"><stop offset="0" stop-color="#FDFDFE"/><stop offset="0.45" stop-color="#E6EAF1"/><stop offset="0.52" stop-color="#C3CCDA"/><stop offset="0.8" stop-color="#E9EDF3"/><stop offset="1" stop-color="#FFFFFF"/></linearGradient>
<linearGradient id="lr" x1="0" y1="0" x2="1" y2="1"><stop offset="0" stop-color="#C0281A"/><stop offset="1" stop-color="#F7A21B"/></linearGradient>
<linearGradient id="lb" x1="0" y1="0" x2="1" y2="1"><stop offset="0" stop-color="#7EC0F0"/><stop offset="1" stop-color="#1F6FC0"/></linearGradient>
<linearGradient id="ly" x1="0" y1="0" x2="1" y2="1"><stop offset="0" stop-color="#F7C840"/><stop offset="1" stop-color="#F5D76A"/></linearGradient>
<linearGradient id="lg" x1="0" y1="0" x2="1" y2="1"><stop offset="0" stop-color="#7CC35A"/><stop offset="1" stop-color="#3E8A28"/></linearGradient>
</defs>
<circle cx="19.8" cy="20" r="17.4" fill="url(#ob)" stroke="#9098A6" stroke-width="1.3"/>
<circle cx="19.8" cy="20" r="16" fill="none" stroke="#FFFFFF" stroke-width="0.9" opacity="0.9"/>
<path d="M19.8 16.5 V12 Q19.8 10.2 18 10.2 H12 Q10.2 10.2 10.2 12 V17.8 Q10.2 19.6 12 19.6 H16.5" fill="none" stroke="url(#lr)" stroke-width="2.8" stroke-linecap="round"/>
<path d="M23.5 15.2 H27 Q28.8 15.2 28.8 17 V20.3" fill="none" stroke="url(#lb)" stroke-width="2.2" stroke-linecap="round"/>
<path d="M20.3 26.5 V30.6 H12.2 V23 H15.8" fill="none" stroke="url(#ly)" stroke-width="2.6" stroke-linejoin="round" stroke-linecap="round"/>
<path d="M23.2 26 V30.5 H30.3 V23 H26.5" fill="none" stroke="url(#lg)" stroke-width="2.6" stroke-linejoin="round" stroke-linecap="round"/>
<circle cx="19.5" cy="19.6" r="1.1" fill="#E0702A"/><circle cx="23.5" cy="19.6" r="1.1" fill="#2F7FD0"/>
<circle cx="19.5" cy="23.2" r="1.1" fill="#F2C040"/><circle cx="23.5" cy="23.2" r="1.1" fill="#58A53A"/>
</svg>
<svg class="a" style="left:40px;top:9px" width="130" height="25" viewBox="0 0 130 25">
<path d="M3 1.5 H99 A10.5 10.5 0 0 1 99 22.5 H14 C13 12 9 4 3 1.5 Z" fill="#F3F6FA" stroke="#B9BEC7" stroke-width="1"/>
<g transform="translate(20,5)">
<rect x="0" y="0" width="14" height="14" rx="1" fill="#3F3DA5"/>
<rect x="2.5" y="0.5" width="9" height="6" fill="#E8ECF8"/>
<rect x="4" y="9" width="6" height="4.5" fill="#1D1A55"/><rect x="5" y="10" width="2" height="2" fill="#CFD3E8"/>
</g>
<g transform="translate(43,5)">
<path d="M1 2.5 L1.5 9 L7.5 8.5 Z" fill="#2F6CC4"/><path d="M3.5 6.5 C6 3.5 12 3.5 12.5 8 C12.8 10.5 11 12.5 8.5 13.5" fill="none" stroke="#2F6CC4" stroke-width="2.4"/>
</g>
<path d="M61 11 L66 11 L63.5 14 Z" fill="#3B5998"/>
<g transform="translate(74,5)">
<path d="M12 2.5 L11.5 9 L5.5 8.5 Z" fill="#A9B7C9"/><path d="M9.5 6.5 C7 3.5 1 3.5 0.5 8 C0.2 10.5 2 12.5 4.5 13.5" fill="none" stroke="#A9B7C9" stroke-width="2.4"/>
</g>
<path d="M92 11 L97 11 L94.5 14 Z" fill="#B5BDC8"/>
<rect x="117" y="7.5" width="6" height="1.3" fill="#1E3F7A"/>
<path d="M116.5 10.5 L123.5 10.5 L120 14.5 Z" fill="#1E3F7A"/>
</svg>
<div class="tx" style="left:509.20px;top:14.10px;font-size:12.000px;color:#000;transform:scaleX(0.9612);transform-origin:0 0">1472434,14 - ЛСР по Методике 2020 (РМ)1.xls - Microsoft Excel</div>
<svg class="a" style="left:1210px;top:5px" width="130" height="28">
<rect x="12" y="14" width="10" height="1" fill="#000"/>
<rect x="56.5" y="9.5" width="10" height="10" fill="none" stroke="#000" stroke-width="1"/>
<path d="M103 9 L113 19 M113 9 L103 19" stroke="#000" stroke-width="1.1"/>
</svg>
<div class="a" style="left:7px;top:149px;width:1334px;height:27px;background:#C5D8EF"></div><div class="a" style="left:8px;top:150px;width:1317px;height:22px;background:#fff;border-top:1px solid #8DA9CF;border-bottom:1px solid #8DA9CF"></div><div class="tx" style="left:62.00px;top:155.80px;font-size:12.000px;color:#000;transform:scaleX(1.0806);transform-origin:0 0">N308</div><svg class="a" style="left:152px;top:158px" width="10" height="6"><path d="M0.5 0.5 H8.5 L4.5 4.5 Z" fill="#000"/></svg><svg class="a" style="left:166px;top:150px" width="88" height="22">
<defs><linearGradient id="fxg" x1="0" y1="0" x2="0" y2="1"><stop offset="0" stop-color="#F4F8FD"/><stop offset="0.5" stop-color="#DCE7F5"/><stop offset="1" stop-color="#C4D6EE"/></linearGradient></defs>
<path d="M11 0.5 H86 V21.5 H11 A10.5 10.5 0 0 1 11 0.5 Z" fill="url(#fxg)" stroke="#9CB3D2"/>
<circle cx="10" cy="9" r="3.5" fill="#B8BEC6"/><circle cx="9.5" cy="8.5" r="1.8" fill="#E9ECF0"/>
<text x="70" y="15.5" font-family="Liberation Serif" font-style="italic" font-weight="bold" font-size="13" fill="#565656">f</text>
<text x="75" y="16" font-family="Liberation Serif" font-style="italic" font-size="10" fill="#565656">x</text>
</svg><div class="a" style="left:253px;top:151px;width:1px;height:20px;background:#C5D3E5"></div><div class="tx" style="left:259.00px;top:155.80px;font-size:12.000px;color:#000;transform:scaleX(1.0399);transform-origin:0 0">245405,69</div><div class="a" style="left:1325px;top:150px;width:15px;height:22px;background:linear-gradient(#F3F7FC,#C9DAF0);border:1px solid #8DA9CF"></div>
<svg class="a" style="left:1327px;top:154px" width="12" height="14"><path d="M2.5 1.5 L6 5 L9.5 1.5 M2.5 6 L6 9.5 L9.5 6" fill="none" stroke="#222" stroke-width="1.6"/></svg>
<div class="a" style="left:8px;top:176px;width:26px;height:20px;background:#B9CFEC;border-right:1px solid #9EB6CE;border-bottom:1px solid #9EB6CE;box-shadow:inset 1px 1px 0 #D6E3F4"></div>
<svg class="a" style="left:16px;top:181px" width="14" height="12"><path d="M13 1 V11 H2 Z" fill="#F2F6FB"/></svg>
<div class="a" style="left:8px;top:172px;width:1317px;height:3px;background:#E3ECF7"></div><div class="a" style="left:8px;top:175px;width:1317px;height:1px;background:#8299B5"></div>
<div class="ch" style="left:34px;width:57px">A</div><div class="ch" style="left:91px;width:134px">B</div><div class="ch" style="left:225px;width:56px">C</div><div class="ch" style="left:281px;width:71px">D</div><div class="ch" style="left:352px;width:57px">E</div><div class="ch" style="left:409px;width:67px">F</div><div class="ch" style="left:476px;width:43px">G</div><div class="ch" style="left:519px;width:59px">H</div><div class="ch" style="left:578px;width:75px">I</div><div class="ch" style="left:653px;width:75px">J</div><div class="ch" style="left:728px;width:78px">K</div><div class="ch" style="left:806px;width:75px">L</div><div class="ch" style="left:881px;width:75px">M</div><div class="ch sel" style="left:956px;width:76px">N</div><div class="ch" style="left:1032px;width:63px">O</div><div class="ch" style="left:1095px;width:64px">P</div><div class="ch" style="left:1159px;width:64px">Q</div><div class="ch" style="left:1223px;width:64px">AM</div><div class="ch" style="left:1287px;width:38px;overflow:hidden;border-right:none"><span style="position:absolute;left:0;width:66px;text-align:center">AN</span></div><div class="rh" style="top:196px;height:15px"><span style="top:-1px">56</span></div><div class="rh" style="top:211px;height:15px"><span style="top:-1px">57</span></div><div class="rh" style="top:226px;height:30px"><span style="top:14px">58</span></div><div class="rh" style="top:256px;height:15px"><span style="top:-1px">59</span></div><div class="rh" style="top:271px;height:30px"><span style="top:14px">60</span></div><div class="rh" style="top:301px;height:15px"><span style="top:-1px">61</span></div><div class="rh" style="top:316px;height:30px"><span style="top:14px">62</span></div><div class="rh" style="top:346px;height:15px"><span style="top:-1px">63</span></div><div class="rh" style="top:361px;height:30px"><span style="top:14px">64</span></div><div class="rh" style="top:391px;height:15px"><span style="top:-1px">65</span></div><div class="rh" style="top:406px;height:30px"><span style="top:14px">66</span></div><div class="rh" style="top:436px;height:15px"><span style="top:-1px">67</span></div><div class="rh" style="top:451px;height:15px"><span style="top:-1px">68</span></div><div class="rh" style="top:466px;height:15px"><span style="top:-1px">69</span></div><div class="rh" style="top:481px;height:15px"><span style="top:-1px">70</span></div><div class="rh" style="top:496px;height:15px"><span style="top:-1px">71</span></div><div class="rh" style="top:511px;height:60px"><span style="top:44px">72</span></div><div class="rh" style="top:571px;height:60px"><span style="top:44px">73</span></div><div class="rh" style="top:631px;height:15px"><span style="top:-1px">74</span></div><div class="rh" style="top:646px;height:27px"><span style="top:14px">75</span></div>
<div class="a" style="left:34px;top:196px;width:995px;height:477px;background:#fff"></div>
<div class="a" style="left:1032px;top:196px;width:293px;height:477px;background:#A0A0A0"></div>
<div class="a" style="left:1029px;top:196px;width:3px;height:477px;background:#0A0ABF"></div>
<div class="a" style="left:34px;top:196px;width:1px;height:477px;background:#1A1A8A"></div>
<svg width="1366" height="768" style="position:absolute;left:0;top:0" shape-rendering="crispEdges"><rect x="34" y="210" width="995" height="1" fill="#D4D8E2"/><rect x="34" y="225" width="995" height="1" fill="#D4D8E2"/><rect x="34" y="255" width="995" height="1" fill="#D4D8E2"/><rect x="34" y="270" width="995" height="1" fill="#D4D8E2"/><rect x="34" y="300" width="995" height="1" fill="#D4D8E2"/><rect x="34" y="315" width="995" height="1" fill="#D4D8E2"/><rect x="34" y="345" width="995" height="1" fill="#D4D8E2"/><rect x="34" y="360" width="995" height="1" fill="#D4D8E2"/><rect x="34" y="390" width="995" height="1" fill="#D4D8E2"/><rect x="34" y="405" width="995" height="1" fill="#D4D8E2"/><rect x="34" y="435" width="995" height="1" fill="#D4D8E2"/><rect x="34" y="450" width="995" height="1" fill="#D4D8E2"/><rect x="34" y="465" width="995" height="1" fill="#D4D8E2"/><rect x="34" y="480" width="995" height="1" fill="#D4D8E2"/><rect x="34" y="495" width="995" height="1" fill="#D4D8E2"/><rect x="34" y="510" width="995" height="1" fill="#D4D8E2"/><rect x="34" y="570" width="995" height="1" fill="#D4D8E2"/><rect x="34" y="630" width="995" height="1" fill="#D4D8E2"/><rect x="34" y="645" width="995" height="1" fill="#D4D8E2"/><rect x="90" y="196" width="1" height="15" fill="#D4D8E2"/><rect x="224" y="196" width="1" height="15" fill="#D4D8E2"/><rect x="90" y="211" width="1" height="15" fill="#D4D8E2"/><rect x="224" y="211" width="1" height="15" fill="#D4D8E2"/><rect x="518" y="211" width="1" height="15" fill="#D4D8E2"/><rect x="577" y="211" width="1" height="15" fill="#D4D8E2"/><rect x="652" y="211" width="1" height="15" fill="#D4D8E2"/><rect x="727" y="211" width="1" height="15" fill="#D4D8E2"/><rect x="805" y="211" width="1" height="15" fill="#D4D8E2"/><rect x="880" y="211" width="1" height="15" fill="#D4D8E2"/><rect x="955" y="211" width="1" height="15" fill="#D4D8E2"/><rect x="90" y="226" width="1" height="30" fill="#D4D8E2"/><rect x="224" y="226" width="1" height="30" fill="#D4D8E2"/><rect x="518" y="226" width="1" height="30" fill="#D4D8E2"/><rect x="577" y="226" width="1" height="30" fill="#D4D8E2"/><rect x="652" y="226" width="1" height="30" fill="#D4D8E2"/><rect x="727" y="226" width="1" height="30" fill="#D4D8E2"/><rect x="805" y="226" width="1" height="30" fill="#D4D8E2"/><rect x="880" y="226" width="1" height="30" fill="#D4D8E2"/><rect x="955" y="226" width="1" height="30" fill="#D4D8E2"/><rect x="90" y="256" width="1" height="15" fill="#D4D8E2"/><rect x="224" y="256" width="1" height="15" fill="#D4D8E2"/><rect x="90" y="271" width="1" height="30" fill="#D4D8E2"/><rect x="224" y="271" width="1" height="30" fill="#D4D8E2"/><rect x="90" y="301" width="1" height="15" fill="#D4D8E2"/><rect x="224" y="301" width="1" height="15" fill="#D4D8E2"/><rect x="518" y="301" width="1" height="15" fill="#D4D8E2"/><rect x="577" y="301" width="1" height="15" fill="#D4D8E2"/><rect x="652" y="301" width="1" height="15" fill="#D4D8E2"/><rect x="727" y="301" width="1" height="15" fill="#D4D8E2"/><rect x="805" y="301" width="1" height="15" fill="#D4D8E2"/><rect x="880" y="301" width="1" height="15" fill="#D4D8E2"/><rect x="955" y="301" width="1" height="15" fill="#D4D8E2"/><rect x="90" y="316" width="1" height="30" fill="#D4D8E2"/><rect x="224" y="316" width="1" height="30" fill="#D4D8E2"/><rect x="518" y="316" width="1" height="30" fill="#D4D8E2"/><rect x="577" y="316" width="1" height="30" fill="#D4D8E2"/><rect x="652" y="316" width="1" height="30" fill="#D4D8E2"/><rect x="727" y="316" width="1" height="30" fill="#D4D8E2"/><rect x="805" y="316" width="1" height="30" fill="#D4D8E2"/><rect x="880" y="316" width="1" height="30" fill="#D4D8E2"/><rect x="955" y="316" width="1" height="30" fill="#D4D8E2"/><rect x="90" y="346" width="1" height="15" fill="#D4D8E2"/><rect x="224" y="346" width="1" height="15" fill="#D4D8E2"/><rect x="518" y="346" width="1" height="15" fill="#D4D8E2"/><rect x="577" y="346" width="1" height="15" fill="#D4D8E2"/><rect x="652" y="346" width="1" height="15" fill="#D4D8E2"/><rect x="727" y="346" width="1" height="15" fill="#D4D8E2"/><rect x="805" y="346" width="1" height="15" fill="#D4D8E2"/><rect x="880" y="346" width="1" height="15" fill="#D4D8E2"/><rect x="955" y="346" width="1" height="15" fill="#D4D8E2"/><rect x="90" y="361" width="1" height="30" fill="#D4D8E2"/><rect x="224" y="361" width="1" height="30" fill="#D4D8E2"/><rect x="518" y="361" width="1" height="30" fill="#D4D8E2"/><rect x="577" y="361" width="1" height="30" fill="#D4D8E2"/><rect x="652" y="361" width="1" height="30" fill="#D4D8E2"/><rect x="727" y="361" width="1" height="30" fill="#D4D8E2"/><rect x="805" y="361" width="1" height="30" fill="#D4D8E2"/><rect x="880" y="361" width="1" height="30" fill="#D4D8E2"/><rect x="955" y="361" width="1" height="30" fill="#D4D8E2"/><rect x="90" y="391" width="1" height="15" fill="#D4D8E2"/><rect x="224" y="391" width="1" height="15" fill="#D4D8E2"/><rect x="518" y="391" width="1" height="15" fill="#D4D8E2"/><rect x="577" y="391" width="1" height="15" fill="#D4D8E2"/><rect x="652" y="391" width="1" height="15" fill="#D4D8E2"/><rect x="727" y="391" width="1" height="15" fill="#D4D8E2"/><rect x="805" y="391" width="1" height="15" fill="#D4D8E2"/><rect x="880" y="391" width="1" height="15" fill="#D4D8E2"/><rect x="955" y="391" width="1" height="15" fill="#D4D8E2"/><rect x="90" y="406" width="1" height="30" fill="#D4D8E2"/><rect x="224" y="406" width="1" height="30" fill="#D4D8E2"/><rect x="518" y="406" width="1" height="30" fill="#D4D8E2"/><rect x="577" y="406" width="1" height="30" fill="#D4D8E2"/><rect x="652" y="406" width="1" height="30" fill="#D4D8E2"/><rect x="727" y="406" width="1" height="30" fill="#D4D8E2"/><rect x="805" y="406" width="1" height="30" fill="#D4D8E2"/><rect x="880" y="406" width="1" height="30" fill="#D4D8E2"/><rect x="955" y="406" width="1" height="30" fill="#D4D8E2"/><rect x="90" y="436" width="1" height="15" fill="#D4D8E2"/><rect x="224" y="436" width="1" height="15" fill="#D4D8E2"/><rect x="518" y="436" width="1" height="15" fill="#D4D8E2"/><rect x="577" y="436" width="1" height="15" fill="#D4D8E2"/><rect x="652" y="436" width="1" height="15" fill="#D4D8E2"/><rect x="727" y="436" width="1" height="15" fill="#D4D8E2"/><rect x="805" y="436" width="1" height="15" fill="#D4D8E2"/><rect x="880" y="436" width="1" height="15" fill="#D4D8E2"/><rect x="955" y="436" width="1" height="15" fill="#D4D8E2"/><rect x="90" y="451" width="1" height="15" fill="#D4D8E2"/><rect x="224" y="451" width="1" height="15" fill="#D4D8E2"/><rect x="518" y="451" width="1" height="15" fill="#D4D8E2"/><rect x="577" y="451" width="1" height="15" fill="#D4D8E2"/><rect x="652" y="451" width="1" height="15" fill="#D4D8E2"/><rect x="727" y="451" width="1" height="15" fill="#D4D8E2"/><rect x="805" y="451" width="1" height="15" fill="#D4D8E2"/><rect x="880" y="451" width="1" height="15" fill="#D4D8E2"/><rect x="955" y="451" width="1" height="15" fill="#D4D8E2"/><rect x="90" y="466" width="1" height="15" fill="#D4D8E2"/><rect x="224" y="466" width="1" height="15" fill="#D4D8E2"/><rect x="518" y="466" width="1" height="15" fill="#D4D8E2"/><rect x="577" y="466" width="1" height="15" fill="#D4D8E2"/><rect x="652" y="466" width="1" height="15" fill="#D4D8E2"/><rect x="727" y="466" width="1" height="15" fill="#D4D8E2"/><rect x="805" y="466" width="1" height="15" fill="#D4D8E2"/><rect x="880" y="466" width="1" height="15" fill="#D4D8E2"/><rect x="955" y="466" width="1" height="15" fill="#D4D8E2"/><rect x="90" y="481" width="1" height="15" fill="#D4D8E2"/><rect x="224" y="481" width="1" height="15" fill="#D4D8E2"/><rect x="518" y="481" width="1" height="15" fill="#D4D8E2"/><rect x="577" y="481" width="1" height="15" fill="#D4D8E2"/><rect x="652" y="481" width="1" height="15" fill="#D4D8E2"/><rect x="727" y="481" width="1" height="15" fill="#D4D8E2"/><rect x="805" y="481" width="1" height="15" fill="#D4D8E2"/><rect x="880" y="481" width="1" height="15" fill="#D4D8E2"/><rect x="955" y="481" width="1" height="15" fill="#D4D8E2"/><rect x="90" y="496" width="1" height="15" fill="#D4D8E2"/><rect x="224" y="496" width="1" height="15" fill="#D4D8E2"/><rect x="518" y="496" width="1" height="15" fill="#D4D8E2"/><rect x="577" y="496" width="1" height="15" fill="#D4D8E2"/><rect x="652" y="496" width="1" height="15" fill="#D4D8E2"/><rect x="727" y="496" width="1" height="15" fill="#D4D8E2"/><rect x="805" y="496" width="1" height="15" fill="#D4D8E2"/><rect x="880" y="496" width="1" height="15" fill="#D4D8E2"/><rect x="955" y="496" width="1" height="15" fill="#D4D8E2"/><rect x="90" y="511" width="1" height="60" fill="#D4D8E2"/><rect x="224" y="511" width="1" height="60" fill="#D4D8E2"/><rect x="518" y="511" width="1" height="60" fill="#D4D8E2"/><rect x="577" y="511" width="1" height="60" fill="#D4D8E2"/><rect x="652" y="511" width="1" height="60" fill="#D4D8E2"/><rect x="727" y="511" width="1" height="60" fill="#D4D8E2"/><rect x="805" y="511" width="1" height="60" fill="#D4D8E2"/><rect x="880" y="511" width="1" height="60" fill="#D4D8E2"/><rect x="955" y="511" width="1" height="60" fill="#D4D8E2"/><rect x="90" y="571" width="1" height="60" fill="#D4D8E2"/><rect x="224" y="571" width="1" height="60" fill="#D4D8E2"/><rect x="518" y="571" width="1" height="60" fill="#D4D8E2"/><rect x="577" y="571" width="1" height="60" fill="#D4D8E2"/><rect x="652" y="571" width="1" height="60" fill="#D4D8E2"/><rect x="727" y="571" width="1" height="60" fill="#D4D8E2"/><rect x="805" y="571" width="1" height="60" fill="#D4D8E2"/><rect x="880" y="571" width="1" height="60" fill="#D4D8E2"/><rect x="955" y="571" width="1" height="60" fill="#D4D8E2"/><rect x="90" y="631" width="1" height="15" fill="#D4D8E2"/><rect x="224" y="631" width="1" height="15" fill="#D4D8E2"/><rect x="518" y="631" width="1" height="15" fill="#D4D8E2"/><rect x="577" y="631" width="1" height="15" fill="#D4D8E2"/><rect x="652" y="631" width="1" height="15" fill="#D4D8E2"/><rect x="727" y="631" width="1" height="15" fill="#D4D8E2"/><rect x="805" y="631" width="1" height="15" fill="#D4D8E2"/><rect x="880" y="631" width="1" height="15" fill="#D4D8E2"/><rect x="955" y="631" width="1" height="15" fill="#D4D8E2"/><rect x="90" y="646" width="1" height="27" fill="#D4D8E2"/><rect x="224" y="646" width="1" height="27" fill="#D4D8E2"/><rect x="518" y="646" width="1" height="27" fill="#D4D8E2"/><rect x="577" y="646" width="1" height="27" fill="#D4D8E2"/><rect x="652" y="646" width="1" height="27" fill="#D4D8E2"/><rect x="727" y="646" width="1" height="27" fill="#D4D8E2"/><rect x="805" y="646" width="1" height="27" fill="#D4D8E2"/><rect x="880" y="646" width="1" height="27" fill="#D4D8E2"/><rect x="955" y="646" width="1" height="27" fill="#D4D8E2"/><rect x="224" y="210" width="805" height="1" fill="#000"/><rect x="34" y="225" width="995" height="1" fill="#000"/><rect x="224" y="480" width="805" height="1" fill="#000"/><rect x="224" y="630" width="805" height="1" fill="#000"/><rect x="34" y="645" width="995" height="1" fill="#000"/><line x1="34" y1="390" x2="1029" y2="390" stroke="#10108A" stroke-width="2" stroke-dasharray="9,3" stroke-dashoffset="2"/></svg>
<div class="ct" style="left:225px;top:196px;width:804px;text-align:left">ТЗР МАТ=2% к расх.</div><div class="ct" style="left:225px;top:211px;width:293px;text-align:left;font-weight:bold">Всего по позиции</div><div class="ct" style="left:956px;top:211px;width:74px;text-align:right;font-weight:bold">17 321,00</div><div class="ct" style="left:34px;top:226px;width:56px;text-align:center;font-weight:bold">4</div><div class="ct" style="left:91px;top:226px;width:133px;text-align:left;font-weight:bold">ГЭСН20-06-019-08</div><div class="ct" style="left:225px;top:226px;width:293px;text-align:left;font-weight:bold"><span style="display:inline-block;transform:scaleX(1.0315);transform-origin:0 0">Установка внутреннего блока кассетного типа</span><br>мощностью: до 5 кВт</div><div class="ct" style="left:519px;top:226px;width:58px;text-align:center;font-weight:bold">шт</div><div class="ct" style="left:728px;top:226px;width:77px;text-align:center;font-weight:bold">7</div><div class="ct" style="left:91px;top:256px;width:133px;text-align:right">Прил.20.1 п.3.7</div><div class="ct" style="left:225px;top:256px;width:804px;text-align:left"><span style="display:inline-block;transform:scaleX(1.0180);transform-origin:0 0">Установка сплит-систем на высоте от пола: св. 3 до 5 м ОЗП=1,02; ТЗ=1,02</span></div><div class="ct" style="left:91px;top:271px;width:133px;text-align:right">Приказ от 04.09.2019 №<br>507/пр п.6.7.1</div><div class="ct" style="left:225px;top:271px;width:804px;text-align:left"><span style="display:inline-block;transform:scaleX(1.0168);transform-origin:0 0">При применении сметных норм, включенных в сборники ГЭСН (аналогичные технологическим процессам в новом строительстве, в том числе по</span><br>возведению новых конструктивных элементов) ОЗП=1,15; ЭМ=1,25 к расх.; ЗПМ=1,25; ТЗ=1,15; ТЗМ=1,25</div><div class="ct" style="left:91px;top:301px;width:133px;text-align:right">1</div><div class="ct" style="left:225px;top:301px;width:293px;text-align:left">ОТ</div><div class="ct" style="left:956px;top:301px;width:74px;text-align:right">5 997,00</div><div class="ct" style="left:91px;top:316px;width:133px;text-align:right">1-5-0</div><div class="ct" style="left:225px;top:316px;width:293px;text-align:left"><span style="display:inline-block;transform:scaleX(1.0274);transform-origin:0 0">Затраты труда рабочих (ср 5)</span></div><div class="ct" style="left:519px;top:316px;width:58px;text-align:center">чел.-ч</div><div class="ct" style="left:578px;top:316px;width:74px;text-align:center">3,02</div><div class="ct" style="left:653px;top:316px;width:74px;text-align:center">1,173<br>(1,02*1,15)</div><div class="ct" style="left:728px;top:316px;width:77px;text-align:center">24,79722</div><div class="ct" style="left:806px;top:316px;width:74px;text-align:right">241,86</div><div class="ct" style="left:956px;top:316px;width:74px;text-align:right">5 997,00</div><div class="ct" style="left:91px;top:346px;width:133px;text-align:right">4</div><div class="ct" style="left:225px;top:346px;width:293px;text-align:left">М</div><div class="ct" style="left:956px;top:346px;width:74px;text-align:right">1 252,00</div><div class="ct" style="left:91px;top:361px;width:133px;text-align:right">01.7.06.03-0024</div><div class="ct" style="left:225px;top:361px;width:293px;text-align:left">Лента полиэтиленовая с липким слоем, толщина 0,1<br>мм</div><div class="ct" style="left:519px;top:361px;width:58px;text-align:center">кг</div><div class="ct" style="left:578px;top:361px;width:74px;text-align:center">0</div><div class="ct" style="left:728px;top:361px;width:77px;text-align:center">0</div><div class="ct" style="left:806px;top:361px;width:74px;text-align:right">218,30</div><div class="ct" style="left:956px;top:361px;width:74px;text-align:right">0,00</div><div class="ct" style="left:91px;top:391px;width:133px;text-align:right">01.7.15.05-0013</div><div class="ct" style="left:225px;top:391px;width:293px;text-align:left">Гайки шестигранные, диаметр резьбы 10 мм</div><div class="ct" style="left:519px;top:391px;width:58px;text-align:center">т</div><div class="ct" style="left:578px;top:391px;width:74px;text-align:center">0,00008</div><div class="ct" style="left:728px;top:391px;width:77px;text-align:center">0,00056</div><div class="ct" style="left:806px;top:391px;width:74px;text-align:right">260 592,69</div><div class="ct" style="left:956px;top:391px;width:74px;text-align:right">146,00</div><div class="ct" style="left:91px;top:406px;width:133px;text-align:right">01.7.15.07-0025</div><div class="ct" style="left:225px;top:406px;width:293px;text-align:left">Дюбели распорные полиэтиленовые, размер 10х40 мм</div><div class="ct" style="left:519px;top:406px;width:58px;text-align:center">1000 шт</div><div class="ct" style="left:578px;top:406px;width:74px;text-align:center">0,004</div><div class="ct" style="left:728px;top:406px;width:77px;text-align:center">0,028</div><div class="ct" style="left:806px;top:406px;width:74px;text-align:right">3 465,24</div><div class="ct" style="left:956px;top:406px;width:74px;text-align:right">97,00</div><div class="ct" style="left:91px;top:436px;width:133px;text-align:right">01.7.15.11-0022</div><div class="ct" style="left:225px;top:436px;width:293px;text-align:left">Шайбы, диаметр 8-12 мм</div><div class="ct" style="left:519px;top:436px;width:58px;text-align:center">кг</div><div class="ct" style="left:578px;top:436px;width:74px;text-align:center">0,0086</div><div class="ct" style="left:728px;top:436px;width:77px;text-align:center">0,0602</div><div class="ct" style="left:806px;top:436px;width:74px;text-align:right">838,50</div><div class="ct" style="left:956px;top:436px;width:74px;text-align:right">50,00</div><div class="ct" style="left:91px;top:451px;width:133px;text-align:right">01.7.15.12-0014</div><div class="ct" style="left:225px;top:451px;width:293px;text-align:left">Шпильки резьбовая М10-2000</div><div class="ct" style="left:519px;top:451px;width:58px;text-align:center">шт</div><div class="ct" style="left:578px;top:451px;width:74px;text-align:center">0,8</div><div class="ct" style="left:728px;top:451px;width:77px;text-align:center">5,6</div><div class="ct" style="left:806px;top:451px;width:74px;text-align:right">171,24</div><div class="ct" style="left:956px;top:451px;width:74px;text-align:right">959,00</div><div class="ct" style="left:91px;top:466px;width:133px;text-align:right">01.7.17.06-0081</div><div class="ct" style="left:225px;top:466px;width:293px;text-align:left">Круг отрезной алмазный, размер 115х2,2х22 мм</div><div class="ct" style="left:519px;top:466px;width:58px;text-align:center">шт</div><div class="ct" style="left:578px;top:466px;width:74px;text-align:center">0</div><div class="ct" style="left:728px;top:466px;width:77px;text-align:center">0</div><div class="ct" style="left:806px;top:466px;width:74px;text-align:right">910,18</div><div class="ct" style="left:956px;top:466px;width:74px;text-align:right">0,00</div><div class="ct" style="left:225px;top:481px;width:293px;text-align:left">Итого</div><div class="ct" style="left:956px;top:481px;width:74px;text-align:right">7 249,00</div><div class="ct" style="left:225px;top:496px;width:293px;text-align:left">ФОТ</div><div class="ct" style="left:956px;top:496px;width:74px;text-align:right">5 997,00</div><div class="ct" style="left:91px;top:511px;width:133px;text-align:right">Приказ № 812/пр от<br>21.12.2020 Прил. п.16</div><div class="ct" style="left:225px;top:511px;width:293px;text-align:left">НР Сантехнические работы - внутренние<br>(трубопроводы, водопровод, канализация, отопление,<br>газоснабжение, вентиляция и кондиционирование<br>воздуха)</div><div class="ct" style="left:519px;top:511px;width:58px;text-align:center">%</div><div class="ct" style="left:578px;top:511px;width:74px;text-align:center">100</div><div class="ct" style="left:728px;top:511px;width:77px;text-align:center">100</div><div class="ct" style="left:956px;top:511px;width:74px;text-align:right">5 997,00</div><div class="ct" style="left:91px;top:571px;width:133px;text-align:right">Приказ № 774/пр от<br>11.12.2020 Прил. п.16</div><div class="ct" style="left:225px;top:571px;width:293px;text-align:left">СП Сантехнические работы - внутренние<br>(трубопроводы, водопровод, канализация, отопление,<br>газоснабжение, вентиляция и кондиционирование<br>воздуха)</div><div class="ct" style="left:519px;top:571px;width:58px;text-align:center">%</div><div class="ct" style="left:578px;top:571px;width:74px;text-align:center">55</div><div class="ct" style="left:728px;top:571px;width:77px;text-align:center">55</div><div class="ct" style="left:956px;top:571px;width:74px;text-align:right">3 298,00</div><div class="ct" style="left:225px;top:631px;width:293px;text-align:left;font-weight:bold">Всего по позиции</div><div class="ct" style="left:956px;top:631px;width:74px;text-align:right;font-weight:bold">16 544,00</div><div class="ct" style="left:34px;top:646px;width:56px;text-align:center;font-weight:bold">5</div><div class="ct" style="left:91px;top:646px;width:133px;text-align:left;font-weight:bold">Прайс</div><div class="ct" style="left:225px;top:646px;width:293px;text-align:left;font-weight:bold"><span style="display:inline-block;transform:scaleX(1.0213);transform-origin:0 0">АМС-18UX4SAA внутренний блок FM кассетного</span><br><span style="display:inline-block;transform:scaleX(0.9779);transform-origin:0 0">типа мульти сплит-системы HISENSE</span></div><div class="ct" style="left:519px;top:646px;width:58px;text-align:center;font-weight:bold">шт.</div><div class="ct" style="left:728px;top:646px;width:77px;text-align:center;font-weight:bold">7</div><div class="ct" style="left:806px;top:646px;width:74px;text-align:right;font-weight:bold">21 509,58</div><div class="ct" style="left:881px;top:646px;width:74px;text-align:center;font-weight:bold">1,02</div><div class="ct" style="left:956px;top:646px;width:74px;text-align:right;font-weight:bold">153 578,00</div>
<svg class="a" style="left:35px;top:226px" width="6" height="6"><path d="M0 0 H5 L0 5 Z" fill="#1F8B1F"/></svg>
<svg class="a" style="left:91px;top:316px" width="6" height="6"><path d="M0 0 H5 L0 5 Z" fill="#1F8B1F"/></svg>
<svg class="a" style="left:35px;top:646px" width="6" height="6"><path d="M0 0 H5 L0 5 Z" fill="#1F8B1F"/></svg>
<div class="a" style="left:1325px;top:176px;width:17px;height:513px;background:linear-gradient(90deg,#C3D4EA 0px,#C3D4EA 1px,#97AFD6 3px,#7593C2 6px,#7D9DCC 13px,#6CA0DA 15px,#3E6EA8 16px)"></div><div class="a" style="left:1327px;top:177px;width:12px;height:8px;background:#fff;border:1px solid #8DA9CF"></div><svg class="a" style="left:1328px;top:188px" width="12" height="8"><path d="M1 6.5 H11 L6 1.5 Z" fill="#3D5C8E"/></svg><div class="a" style="left:1326px;top:272px;width:14px;height:38px;border:1px solid #8FA6C6;border-radius:2px;background:linear-gradient(90deg,#F6F8FB,#E4E9F0 50%,#D2DAE5)"></div><svg class="a" style="left:1328px;top:286px" width="10" height="10"><g fill="#6E7A8A"><rect x="1" y="1" width="8" height="1"/><rect x="1" y="3" width="8" height="1"/><rect x="1" y="5" width="8" height="1"/><rect x="1" y="7" width="8" height="1"/></g></svg><svg class="a" style="left:1328px;top:661px" width="12" height="8"><path d="M1 1.5 H11 L6 6.5 Z" fill="#3D5C8E"/></svg>
<div class="a" style="left:7px;top:673px;width:1319px;height:16px;background:linear-gradient(#D6E4F5,#B5CDEA)"></div><div class="a" style="left:7px;top:687px;width:1334px;height:2px;background:#7EA2D3"></div><div class="a" style="left:8px;top:673px;width:62px;height:15px;background:linear-gradient(#EAF1FB,#C7DAF1);border-right:1px solid #9FB9DC;border-top:1px solid #AFC6E3"></div><svg class="a" style="left:10px;top:675px" width="60" height="12" fill="#1F3F7A">
<rect x="4" y="2" width="1.5" height="8"/><path d="M11 2 L6.5 6 L11 10 Z"/>
<path d="M23 2 L18.5 6 L23 10 Z"/>
<path d="M33 2 L37.5 6 L33 10 Z"/>
<path d="M45 2 L49.5 6 L45 10 Z"/><rect x="50.5" y="2" width="1.5" height="8"/>
</svg><svg class="a" style="left:70px;top:672px" width="730" height="17">
<defs><linearGradient id="tbg" x1="0" y1="0" x2="0" y2="1"><stop offset="0" stop-color="#C9DBF2"/><stop offset="1" stop-color="#9AB8E2"/></linearGradient>
<linearGradient id="tact" x1="0" y1="0" x2="0" y2="1"><stop offset="0" stop-color="#FFFFFF"/><stop offset="1" stop-color="#E9EFF8"/></linearGradient>
<linearGradient id="tnew" x1="0" y1="0" x2="0" y2="1"><stop offset="0" stop-color="#E4EDF9"/><stop offset="1" stop-color="#C4D6EF"/></linearGradient></defs>
<rect x="0" y="0" width="730" height="17" fill="url(#tbg)"/>
<rect x="0" y="1" width="730" height="1" fill="#8CAAD6"/>
<path d="M0 1 H77 L62 16 H2 Z" fill="url(#tact)"/>
<path d="M62 16 L77 1 H109 L95 16 Z" fill="url(#tnew)" stroke="#A3BDE2" stroke-width="1"/>
<rect x="0" y="15" width="730" height="2" fill="#7FA0D2"/>
</svg><div class="tx" style="left:80.00px;top:674.45px;font-size:13.000px;color:#1B3E78;font-weight:bold;transform:scaleX(0.9400);transform-origin:0 0">Альбом</div><svg class="a" style="left:146px;top:673px" width="20" height="15">
<path d="M3.5 4.5 H12.5 Q14.5 4.5 14.5 6.5 V11.5 H6 L4 13.5 Z" fill="#F4F5F7" stroke="#6F7784"/>
<circle cx="4.5" cy="4" r="2.8" fill="#F8D34A"/><path d="M4.5 0 V8 M0.5 4 H8.5 M1.7 1.2 L7.3 6.8 M7.3 1.2 L1.7 6.8" stroke="#F0B020" stroke-width="0.8"/>
</svg><div class="a" style="left:798px;top:674px;width:528px;height:14px;background:linear-gradient(#8EABD7,#7794C4 45%,#7E9DCC)"></div><div class="a" style="left:799px;top:675px;width:6px;height:13px;background:#fff;border:1px solid #9AB3D5"></div><div class="a" style="left:801px;top:677px;width:1px;height:8px;background:#555"></div><svg class="a" style="left:808px;top:676px" width="8" height="10"><path d="M6 0.5 V9.5 L1 5 Z" fill="#3D5C8E"/></svg><div class="a" style="left:823px;top:674px;width:451px;height:14px;border:1px solid #9FB3CF;border-radius:2px;background:linear-gradient(#F8F9FB,#E6EAF0 50%,#D6DDE7)"></div><svg class="a" style="left:1044px;top:677px" width="10" height="8"><g fill="#7E8794"><rect x="1" y="1" width="1" height="6"/><rect x="3" y="1" width="1" height="6"/><rect x="5" y="1" width="1" height="6"/><rect x="7" y="1" width="1" height="6"/></g></svg><svg class="a" style="left:1305px;top:676px" width="8" height="10"><path d="M1 0.5 V9.5 L6 5 Z" fill="#3D5C8E"/></svg><div class="a" style="left:1318px;top:675px;width:6px;height:13px;background:#fff;border:1px solid #9AB3D5"></div><div class="a" style="left:1320px;top:677px;width:1px;height:8px;background:#555"></div>
<div class="a" style="left:7px;top:689px;width:1334px;height:22px;background:linear-gradient(#EAF2FC,#D7E6F7 45%,#C9DCF3 55%,#D3E3F6)"></div><div class="a" style="left:7px;top:689px;width:1334px;height:1px;background:#7D9CCB"></div><div class="a" style="left:7px;top:710px;width:1335px;height:1px;background:#5B8DC9"></div><div class="tx" style="left:15.50px;top:695.02px;font-size:11.500px;color:#1A3570;transform:scaleX(1.0136);transform-origin:0 0">Готово</div><div class="a" style="left:60px;top:691px;width:1px;height:18px;background:#A8C0E0;box-shadow:1px 0 0 #F4F8FE"></div><svg class="a" style="left:69px;top:691px" width="18" height="16">
<rect x="1.5" y="3.5" width="14" height="11" fill="#F7F9FC" stroke="#4A6A9E"/><rect x="2" y="4" width="13" height="2.5" fill="#4C78C9"/>
<g fill="#8CA0BF"><rect x="3" y="8" width="11" height="1"/><rect x="3" y="10.5" width="11" height="1"/><rect x="7" y="7" width="1" height="7"/></g>
<circle cx="4.5" cy="3.5" r="3" fill="#E0532A"/>
</svg><div class="a" style="left:94px;top:691px;width:1px;height:18px;background:#A8C0E0;box-shadow:1px 0 0 #F4F8FE"></div><div class="a" style="left:1080px;top:689px;width:261px;height:22px;background:linear-gradient(#C9DBF2,#A9C3E7 50%,#B7CEEE)"></div><div class="a" style="left:1080px;top:689px;width:1px;height:22px;background:#8EA9D0;box-shadow:-1px 0 0 #F2F7FD"></div><div class="a" style="left:1087px;top:691px;width:56px;height:18px;border-radius:3px;background:linear-gradient(#EEF4FC,#D3E2F5);border:1px solid #A3BCE0"></div><div class="a" style="left:1124px;top:691px;width:19px;height:18px;border-radius:0 3px 3px 0;background:linear-gradient(#FCE7B2,#F7C866 60%,#FBD98C);border:1px solid #D6AC58"></div><svg class="a" style="left:1088px;top:692px" width="56" height="16">
<rect x="1.5" y="1.5" width="12" height="10" fill="#fff" stroke="#4B5563"/><g fill="#4B5563"><rect x="1.5" y="4.5" width="12" height="1"/><rect x="1.5" y="8" width="12" height="1"/><rect x="5.5" y="1.5" width="1" height="10"/><rect x="9.5" y="1.5" width="1" height="10"/></g>
<rect x="20.5" y="1.5" width="12" height="11" fill="#9EA4AC" stroke="#4B5563"/><rect x="23.5" y="3.5" width="6" height="7" fill="#F4F5F7" stroke="#6B7280" stroke-width="0.8"/><g fill="#8A9099"><rect x="25" y="5" width="3" height="0.8"/><rect x="25" y="7" width="3" height="0.8"/></g>
<rect x="38.5" y="1.5" width="12" height="11" fill="#A2A7AE" stroke="#4B5563"/><rect x="40" y="1.5" width="3.5" height="6" fill="#fff"/><rect x="44.5" y="1.5" width="3.5" height="6" fill="#fff"/>
</svg><div class="tx" style="left:1152.00px;top:695.02px;font-size:11.500px;color:#1A3570;transform:scaleX(0.8497);transform-origin:0 0">100%</div><svg class="a" style="left:1184px;top:690px" width="140" height="20">
<defs><linearGradient id="zb" x1="0" y1="0" x2="0" y2="1"><stop offset="0" stop-color="#FFFFFF"/><stop offset="1" stop-color="#C9D6E8"/></linearGradient></defs>
<rect x="19" y="9.5" width="102" height="1" fill="#7C94B6"/><rect x="19" y="10.5" width="102" height="1" fill="#F5F8FC"/>
<circle cx="11" cy="10" r="8" fill="url(#zb)" stroke="#7388A6"/><rect x="6.5" y="9" width="9" height="2.2" fill="#3B4C66"/>
<circle cx="129" cy="10" r="8" fill="url(#zb)" stroke="#7388A6"/><rect x="124.5" y="9" width="9" height="2.2" fill="#3B4C66"/><rect x="128" y="5.5" width="2.2" height="9" fill="#3B4C66"/>
<path d="M64.5 2.5 H73.5 V13 L69 17 L64.5 13 Z" fill="url(#zb)" stroke="#6E84A4"/><rect x="68.5" y="6" width="1" height="6" fill="#6E84A4"/>
</svg><svg class="a" style="left:1329px;top:697px" width="12" height="12"><g fill="#7D93B2"><rect x="9" y="1" width="2" height="2"/><rect x="6" y="4" width="2" height="2"/><rect x="9" y="4" width="2" height="2"/><rect x="3" y="7" width="2" height="2"/><rect x="6" y="7" width="2" height="2"/><rect x="9" y="7" width="2" height="2"/></g></svg>
<div class="a" style="left:0;top:728px;width:1366px;height:40px;background:#1E1311"></div><div class="a" style="left:343px;top:728px;width:48px;height:40px;background:#3B3230"></div><svg class="a" style="left:16px;top:740px" width="17" height="17" fill="#fff"><path d="M0 2.3 L7 1.3 V8 H0 Z M8 1.2 L16 0 V8 H8 Z M0 9 H7 V15.7 L0 14.7 Z M8 9 H16 V17 L8 15.8 Z"/></svg><svg class="a" style="left:63px;top:739px" width="18" height="18"><circle cx="11" cy="7" r="5.6" fill="none" stroke="#fff" stroke-width="1.4"/><path d="M7 11 L1.5 16.5" stroke="#fff" stroke-width="1.6"/></svg><svg class="a" style="left:111px;top:740px" width="18" height="18" fill="#fff"><rect x="1" y="1" width="10" height="1.3"/><rect x="1" y="15.7" width="10" height="1.3"/><path d="M2.6 4.6 H10 V12.4 H2.6 Z" fill="none" stroke="#fff" stroke-width="1.3"/><rect x="14" y="1" width="1.3" height="2.5"/><rect x="13.3" y="5" width="2.7" height="3.6"/><rect x="14" y="10" width="1.3" height="7"/></svg><svg class="a" style="left:160px;top:739px" width="22" height="19"><path d="M0 2 H7 L9 4 H21 V18 H0 Z" fill="#F5C542"/><rect x="0" y="6" width="21" height="12" fill="#FCE08A"/><path d="M5 18 V12 H16 V18 H13 V15 H8 V18 Z" fill="#2B9BE3"/></svg><svg class="a" style="left:208px;top:737px" width="22" height="22" viewBox="0 0 22 22">
<circle cx="11" cy="11" r="10.5" fill="#DB4437"/>
<path d="M11 11 L20.1 5.75 A10.5 10.5 0 0 1 11 21.5 Z" fill="#F4C20D"/>
<path d="M11 11 L11 21.5 A10.5 10.5 0 0 1 1.9 5.75 Z" fill="#0F9D58"/>
<path d="M11 11 L1.9 5.75 A10.5 10.5 0 0 1 20.1 5.75 Z" fill="#DB4437"/>
<circle cx="11" cy="11" r="5" fill="#fff"/><circle cx="11" cy="11" r="4" fill="#4285F4"/>
</svg><svg class="a" style="left:256px;top:735px" width="26" height="25">
<g fill="#E8623E"><rect x="1" y="1" width="5" height="5"/><rect x="6" y="3" width="6" height="5"/><rect x="12" y="3" width="6" height="5"/></g>
<g fill="#D9492E"><rect x="6" y="8" width="6" height="6"/><rect x="12" y="8" width="6" height="6"/></g>
<g fill="#3E7ED2"><rect x="1" y="7" width="5" height="6"/><rect x="1" y="13" width="5" height="6"/><rect x="6" y="14" width="6" height="6"/><rect x="12" y="14" width="6" height="6"/><rect x="18" y="14" width="6" height="6"/></g>
<g fill="#5A9AE8"><rect x="1" y="19" width="5" height="4"/><rect x="6" y="20" width="6" height="4"/><rect x="12" y="20" width="6" height="4"/><rect x="18" y="20" width="6" height="4"/></g>
<g fill="none" stroke="#1F1513" stroke-opacity="0.25" stroke-width="0.6"><path d="M1 13 H24 M1 19 H24 M6 3 V24 M12 3 V24 M18 3 V24"/></g>
</svg><svg class="a" style="left:306px;top:736px" width="24" height="24">
<rect x="0.5" y="0.5" width="23" height="23" fill="#0E1A7A" stroke="#FFFFFF" stroke-width="1" stroke-dasharray="1.5,1"/>
<circle cx="12" cy="12" r="9.5" fill="#F3EC74"/>
<path d="M2.5 10 C5.5 9.5 7 11 7 13.5 C8.5 12.5 10 13 12 16 C14 13 15.5 12.5 17 13.5 C17 11 18.5 9.5 21.5 10 C19.5 13 19.5 17 16 19 C14.5 17.5 13 18 12 20 C11 18 9.5 17.5 8 19 C4.5 17 4.5 13 2.5 10 Z" fill="#0A0A0A"/>
<path d="M10 6 L10.8 8.5 H13.2 L14 6 L14.5 10 C13.5 11.5 10.5 11.5 9.5 10 Z" fill="#0A0A0A"/>
</svg><svg class="a" style="left:354px;top:736px" width="26" height="24">
<defs><linearGradient id="xg" x1="0" y1="0" x2="1" y2="1"><stop offset="0" stop-color="#D6EEC8"/><stop offset="1" stop-color="#A9D68E"/></linearGradient></defs>
<path d="M3 3 Q3 1 5 1 H19 L21 3 V20 H3 Z" fill="url(#xg)" stroke="#6DAF4E" stroke-width="0.8"/>
<path d="M6 7 L24 8.5 V23 L6 21.5 Z" fill="#EFF8EA" stroke="#8CC46E" stroke-width="0.8"/>
<g fill="#5FA842"><rect x="14" y="10" width="3" height="2"/><rect x="18.5" y="10.5" width="3" height="2"/><rect x="14" y="14" width="3" height="2"/><rect x="18.5" y="14.5" width="3" height="2"/><rect x="8" y="17.5" width="3" height="2"/><rect x="12" y="18" width="3" height="2"/><rect x="16" y="18.3" width="3" height="2"/><rect x="20" y="18.6" width="2.5" height="2"/></g>
<path d="M7.5 9 L12.5 15.5 M12.5 9 L7.5 15.5" stroke="#1E7A2A" stroke-width="2.2"/>
</svg><svg class="a" style="left:406px;top:737px" width="20" height="23">
<defs><linearGradient id="cg" x1="0" y1="0" x2="1" y2="1"><stop offset="0" stop-color="#EAF4FC"/><stop offset="1" stop-color="#9CC7EA"/></linearGradient></defs>
<rect x="0.5" y="0.5" width="18" height="22" rx="2" fill="url(#cg)" stroke="#5B93C7"/>
<rect x="3" y="2.5" width="13" height="5" fill="#FFFFFF" stroke="#8DB6DC" stroke-width="0.6"/>
<g fill="#5F9AD0"><rect x="3" y="10" width="3" height="2"/><rect x="8" y="10" width="3" height="2"/><rect x="13" y="10" width="3" height="2"/><rect x="3" y="14" width="3" height="2"/><rect x="8" y="14" width="3" height="2"/><rect x="13" y="14" width="3" height="2"/><rect x="3" y="18" width="3" height="2"/><rect x="8" y="18" width="3" height="2"/><rect x="13" y="18" width="3" height="2"/></g>
</svg><svg class="a" style="left:452px;top:736px" width="26" height="24">
<path d="M12 3 C4 3 1 9 1 13 C1 18 5 20 7 18 C9 16 10 17 11 19 C12 22 22 20 23 13 C24 7 19 3 12 3 Z" fill="#E9EEF5" stroke="#9AA6B5"/>
<circle cx="7" cy="9" r="2" fill="#2F7FD8"/><circle cx="12" cy="7" r="2" fill="#E8B82A"/><circle cx="17" cy="9" r="2" fill="#D8403A"/><circle cx="6" cy="14" r="2" fill="#3AAA4A"/>
<path d="M24 1 L14 17" stroke="#C98A2E" stroke-width="2.5"/><path d="M15 15 L13 20 L16 17 Z" fill="#333"/>
</svg><div class="a" style="left:151px;top:766px;width:40px;height:2px;background:#76B9ED"></div><div class="a" style="left:200px;top:766px;width:40px;height:2px;background:#76B9ED"></div><div class="a" style="left:249px;top:766px;width:40px;height:2px;background:#76B9ED"></div><div class="a" style="left:298px;top:766px;width:40px;height:2px;background:#76B9ED"></div><div class="a" style="left:343px;top:766px;width:48px;height:2px;background:#76B9ED"></div><div class="a" style="left:396px;top:766px;width:40px;height:2px;background:#76B9ED"></div><div class="a" style="left:445px;top:766px;width:40px;height:2px;background:#76B9ED"></div><svg class="a" style="left:1047px;top:740px" width="18" height="18"><circle cx="6" cy="6" r="4.8" fill="#fff"/><rect x="4.5" y="9" width="3" height="6" fill="#fff"/><rect x="8.5" y="9" width="9" height="8" rx="1.5" fill="#27A073"/><path d="M10.5 9 V7.5 A2.5 2.5 0 0 1 15.5 7.5 V9" fill="none" stroke="#fff" stroke-width="1.2"/><rect x="10.5" y="11.5" width="5" height="3.5" fill="#E9F7F1"/></svg><svg class="a" style="left:1072px;top:740px" width="15" height="17" fill="none" stroke="#fff" stroke-width="1.2"><path d="M2 5 A7 7 0 0 1 13 5 M4 7 A4.5 4.5 0 0 1 11 7"/><rect x="3" y="10" width="9" height="6" fill="#fff" stroke="none"/><path d="M5 10 V8.5 A2.5 2.5 0 0 1 10 8.5 V10"/><rect x="6.5" y="12" width="2" height="2" fill="#1F1513" stroke="none"/></svg><svg class="a" style="left:1096px;top:739px" width="17" height="19" fill="none" stroke="#fff" stroke-width="1.1"><rect x="2.5" y="5.5" width="7" height="12" rx="1"/><rect x="3.5" y="1.5" width="5" height="4"/><path d="M9 16 L11 18 L16 12"/></svg><svg class="a" style="left:1120px;top:739px" width="15" height="18"><path d="M7.5 0.5 L14 3 V9 C14 13 10.5 16 7.5 17.5 C4.5 16 1 13 1 9 V3 Z" fill="#1E9E78"/><path d="M4.5 8.5 L6.8 10.8 L10.8 6.5" fill="none" stroke="#fff" stroke-width="1.4"/></svg><svg class="a" style="left:1142px;top:742px" width="19" height="13" fill="none" stroke="#fff" stroke-width="1.1"><path d="M0.5 4.5 H3 M0.5 8.5 H3 M3.5 2.5 V10.5 H5.5 V2.5 Z"/><rect x="6.5" y="3.5" width="10" height="7" fill="#fff"/><rect x="16.5" y="5.5" width="1.5" height="3" fill="#fff" stroke="none"/></svg><svg class="a" style="left:1166px;top:740px" width="18" height="17" fill="none" stroke="#fff" stroke-width="1.1"><rect x="4.5" y="2.5" width="12" height="9"/><path d="M10.5 11.5 V14.5 M6.5 14.5 H14.5 M0.5 0.5 V6.5 H4.5 M0.5 0.5 H3"/></svg><svg class="a" style="left:1190px;top:741px" width="18" height="15" fill="none" stroke="#fff" stroke-width="1.1"><path d="M1 5 H4 L8 1.5 V13.5 L4 10 H1 Z"/><path d="M10.5 5 C11.8 6.2 11.8 8.8 10.5 10 M13 3 C15.5 5.5 15.5 9.5 13 12"/><path d="M15.5 1 C19 4.5 19 10.5 15.5 14" stroke="#888"/></svg><div class="tx" style="left:1217.50px;top:741.80px;font-size:12.000px;color:#fff;transform:scaleX(0.8495);transform-origin:0 0">ENG</div><div class="tx" style="left:1266.60px;top:733.80px;font-size:12.000px;color:#fff;transform:scaleX(0.8791);transform-origin:0 0">17:36</div><div class="tx" style="left:1254.00px;top:751.30px;font-size:12.000px;color:#fff;transform:scaleX(0.8774);transform-origin:0 0">12.08.2022</div><svg class="a" style="left:1325px;top:737px" width="26" height="26">
<path d="M1.5 2.5 H19.5 V15.5 H8 L4 19 V15.5 H1.5 Z" fill="#fff"/>
<g fill="#1F1513"><rect x="4" y="5.5" width="13" height="1.3"/><rect x="4" y="8.5" width="13" height="1.3"/><rect x="4" y="11.5" width="9" height="1.3"/></g>
<circle cx="17" cy="18" r="6.5" fill="#1F1513" stroke="#fff" stroke-width="1.2"/>
<text x="17" y="22" font-family="Liberation Sans" font-size="10.5" fill="#fff" text-anchor="middle" font-weight="bold">1</text>
</svg>
</body></html>
